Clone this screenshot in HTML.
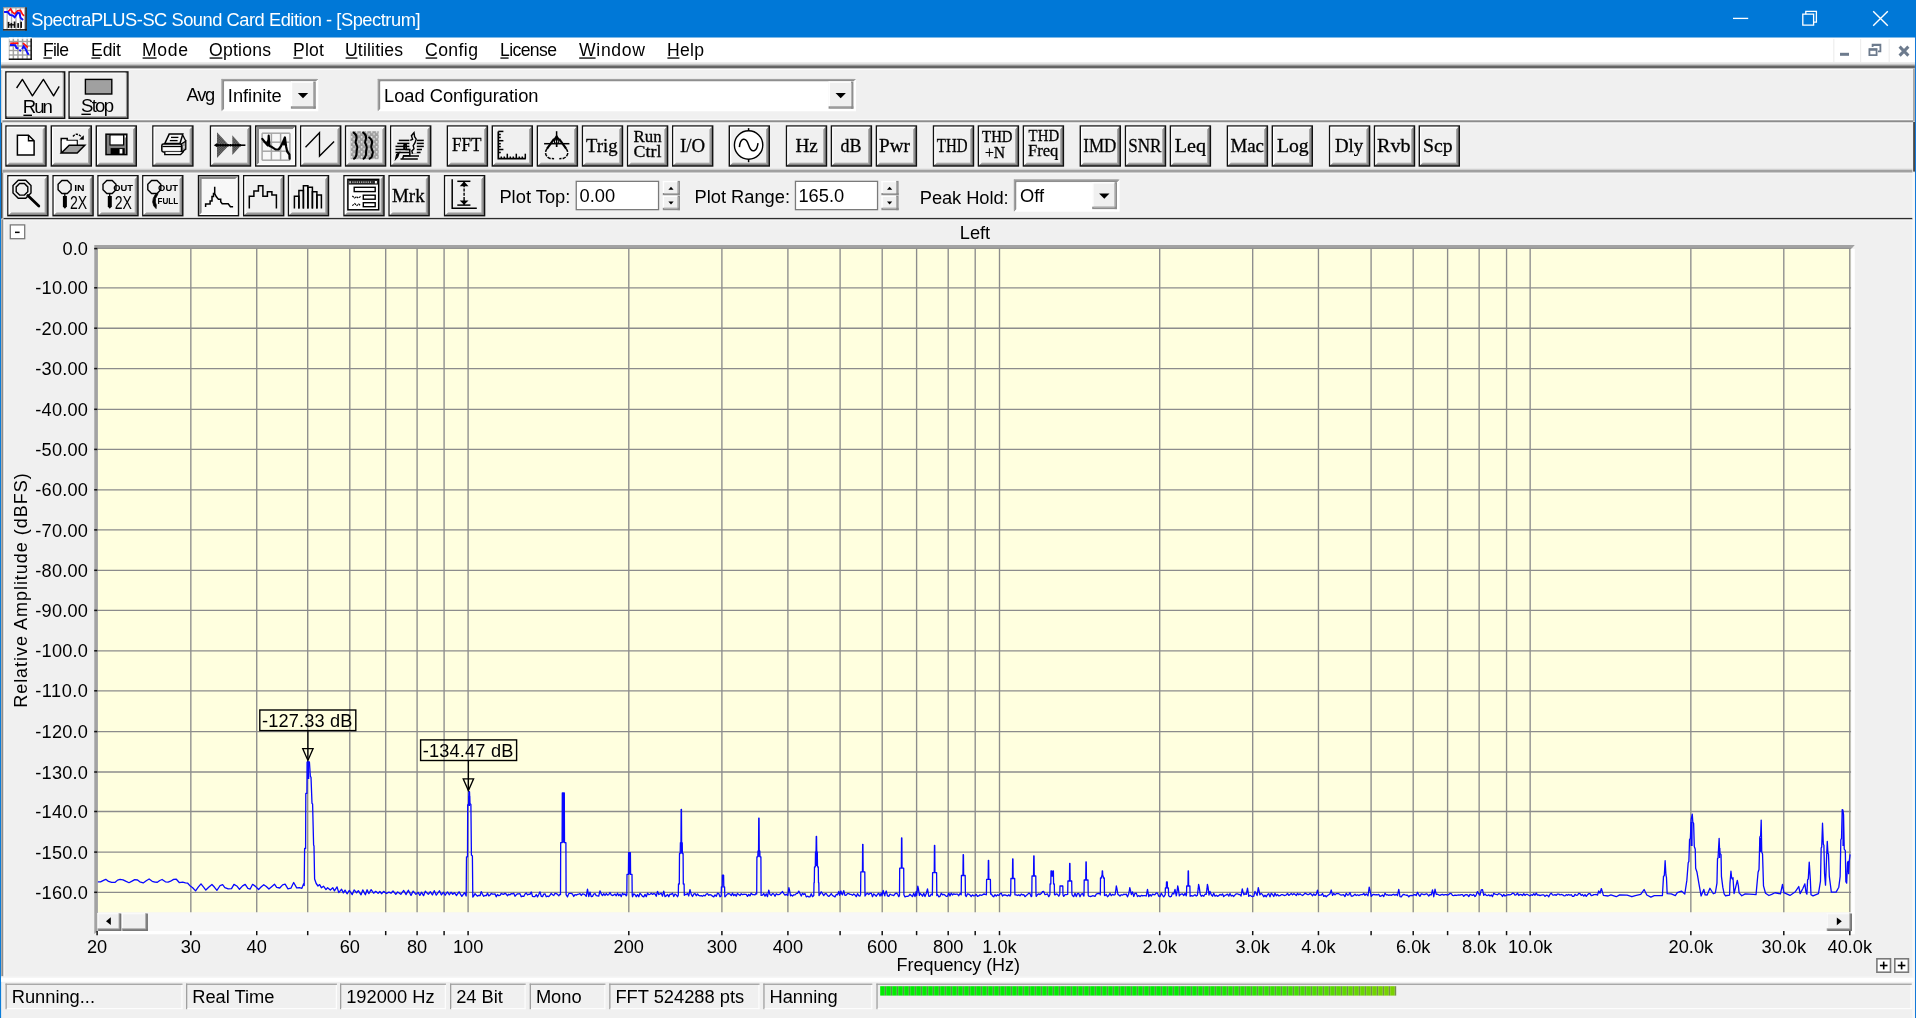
<!DOCTYPE html>
<html><head><meta charset="utf-8"><title>SpectraPLUS-SC</title>
<style>
html,body{margin:0;padding:0;background:#f0f0f0;overflow:hidden}
svg{display:block}
text{font-family:"Liberation Sans",sans-serif;white-space:pre;filter:grayscale(1)}
text.s{font-family:"Liberation Serif",serif}
</style></head><body>
<svg width="1916" height="1018" viewBox="0 0 1916 1018">
<rect x="0" y="0" width="1916" height="1018" fill="#f0f0f0"/>
<rect x="0" y="0" width="1916" height="37.7" fill="#0078d7"/>
<rect x="0" y="37" width="1.1" height="981" fill="#0a7cd9"/>
<rect x="1914.9" y="37" width="1.1" height="981" fill="#1479d8"/>
<rect x="1.1" y="37.7" width="1913.8" height="24.3" fill="#fff"/>
<rect x="1.1" y="62" width="1913.8" height="1.8" fill="#ececec"/>
<rect x="1.1" y="63.8" width="1913.8" height="1.6" fill="#c4c4c4"/>
<rect x="1.1" y="65.4" width="1913.8" height="3.2" fill="#646464"/>
<rect x="1.1" y="68.6" width="1913.8" height="1.4" fill="#fbfbfb"/>
<text x="31.2" y="25.6" font-size="18.3" textLength="389.3" lengthAdjust="spacing" fill="#fff">SpectraPLUS-SC Sound Card Edition - [Spectrum]</text>
<line x1="1733" y1="18.4" x2="1748.2" y2="18.4" stroke="#fff" stroke-width="1.3"/>
<path d="M1802.8 14.2 H1813.6 V25.2 H1802.8 Z" stroke="#fff" stroke-width="1.3" fill="none"/>
<path d="M1805.8 14.2 V11.4 H1816.4 V22.2 H1813.6" stroke="#fff" stroke-width="1.3" fill="none"/>
<path d="M1873.2 11.2 L1887.8 25.8 M1887.8 11.2 L1873.2 25.8" stroke="#fff" stroke-width="1.4" fill="none"/>
<text x="43" y="55.6" font-size="17.6" textLength="26" lengthAdjust="spacing">File</text>
<text x="91" y="55.6" font-size="17.6" textLength="30" lengthAdjust="spacing">Edit</text>
<text x="142" y="55.6" font-size="17.6" textLength="46" lengthAdjust="spacing">Mode</text>
<text x="209" y="55.6" font-size="17.6" textLength="62" lengthAdjust="spacing">Options</text>
<text x="293" y="55.6" font-size="17.6" textLength="31" lengthAdjust="spacing">Plot</text>
<text x="345" y="55.6" font-size="17.6" textLength="58" lengthAdjust="spacing">Utilities</text>
<text x="425" y="55.6" font-size="17.6" textLength="53" lengthAdjust="spacing">Config</text>
<text x="500" y="55.6" font-size="17.6" textLength="57" lengthAdjust="spacing">License</text>
<text x="579" y="55.6" font-size="17.6" textLength="66" lengthAdjust="spacing">Window</text>
<text x="667" y="55.6" font-size="17.6" textLength="37" lengthAdjust="spacing">Help</text>
<rect x="1833.2" y="39" width="1.2" height="23" fill="#eeeeee"/>
<rect x="1860" y="39" width="1.2" height="23" fill="#eeeeee"/>
<rect x="1888.6" y="39" width="1.2" height="23" fill="#eeeeee"/>
<rect x="1840" y="52.8" width="9" height="3" fill="#6d7b8d"/>
<path d="M1872.6 47 V44.6 H1880.4 V51.4 H1878" stroke="#6d7b8d" stroke-width="1.8" fill="none"/>
<rect x="1872.6" y="45" width="7.8" height="1" fill="#6d7b8d"/>
<path d="M1869.4 49.2 H1876.6 V55.2 H1869.4 Z" stroke="#6d7b8d" stroke-width="1.8" fill="none"/>
<rect x="1869" y="48.6" width="8" height="2.2" fill="#6d7b8d"/>
<path d="M1899.6 46.6 L1908.4 55.6 M1908.4 46.6 L1899.6 55.6" stroke="#6d7b8d" stroke-width="3" fill="none"/>
<rect x="97.8" y="248.6" width="1752.8" height="663.9" fill="#ffffdf"/>
<line x1="190.84" y1="248.6" x2="190.84" y2="912.5" stroke="#8c8c8c" stroke-width="1.35"/>
<line x1="256.73" y1="248.6" x2="256.73" y2="912.5" stroke="#8c8c8c" stroke-width="1.35"/>
<line x1="307.71" y1="248.6" x2="307.71" y2="912.5" stroke="#8c8c8c" stroke-width="1.35"/>
<line x1="349.8" y1="248.6" x2="349.8" y2="912.5" stroke="#8c8c8c" stroke-width="1.35"/>
<line x1="385.7" y1="248.6" x2="385.7" y2="912.5" stroke="#8c8c8c" stroke-width="1.35"/>
<line x1="417.1" y1="248.6" x2="417.1" y2="912.5" stroke="#8c8c8c" stroke-width="1.35"/>
<line x1="444.1" y1="248.6" x2="444.1" y2="912.5" stroke="#8c8c8c" stroke-width="1.35"/>
<line x1="468.1" y1="248.6" x2="468.1" y2="912.5" stroke="#8c8c8c" stroke-width="1.35"/>
<line x1="628.8" y1="248.6" x2="628.8" y2="912.5" stroke="#8c8c8c" stroke-width="1.35"/>
<line x1="721.9" y1="248.6" x2="721.9" y2="912.5" stroke="#8c8c8c" stroke-width="1.35"/>
<line x1="787.9" y1="248.6" x2="787.9" y2="912.5" stroke="#8c8c8c" stroke-width="1.35"/>
<line x1="840.1" y1="248.6" x2="840.1" y2="912.5" stroke="#8c8c8c" stroke-width="1.35"/>
<line x1="882.2" y1="248.6" x2="882.2" y2="912.5" stroke="#8c8c8c" stroke-width="1.35"/>
<line x1="916.6" y1="248.6" x2="916.6" y2="912.5" stroke="#8c8c8c" stroke-width="1.35"/>
<line x1="948.2" y1="248.6" x2="948.2" y2="912.5" stroke="#8c8c8c" stroke-width="1.35"/>
<line x1="975.2" y1="248.6" x2="975.2" y2="912.5" stroke="#8c8c8c" stroke-width="1.35"/>
<line x1="999.5" y1="248.6" x2="999.5" y2="912.5" stroke="#8c8c8c" stroke-width="1.35"/>
<line x1="1159.7" y1="248.6" x2="1159.7" y2="912.5" stroke="#8c8c8c" stroke-width="1.35"/>
<line x1="1252.7" y1="248.6" x2="1252.7" y2="912.5" stroke="#8c8c8c" stroke-width="1.35"/>
<line x1="1318.45" y1="248.6" x2="1318.45" y2="912.5" stroke="#8c8c8c" stroke-width="1.35"/>
<line x1="1371.1" y1="248.6" x2="1371.1" y2="912.5" stroke="#8c8c8c" stroke-width="1.35"/>
<line x1="1413.2" y1="248.6" x2="1413.2" y2="912.5" stroke="#8c8c8c" stroke-width="1.35"/>
<line x1="1447.6" y1="248.6" x2="1447.6" y2="912.5" stroke="#8c8c8c" stroke-width="1.35"/>
<line x1="1479.15" y1="248.6" x2="1479.15" y2="912.5" stroke="#8c8c8c" stroke-width="1.35"/>
<line x1="1506.55" y1="248.6" x2="1506.55" y2="912.5" stroke="#8c8c8c" stroke-width="1.35"/>
<line x1="1530.15" y1="248.6" x2="1530.15" y2="912.5" stroke="#8c8c8c" stroke-width="1.35"/>
<line x1="1690.85" y1="248.6" x2="1690.85" y2="912.5" stroke="#8c8c8c" stroke-width="1.35"/>
<line x1="1783.8" y1="248.6" x2="1783.8" y2="912.5" stroke="#8c8c8c" stroke-width="1.35"/>
<line x1="1849.8" y1="248.6" x2="1849.8" y2="912.5" stroke="#8c8c8c" stroke-width="1.35"/>
<line x1="97.8" y1="287.8" x2="1851.2" y2="287.8" stroke="#8c8c8c" stroke-width="1.35"/>
<line x1="97.8" y1="328.2" x2="1851.2" y2="328.2" stroke="#8c8c8c" stroke-width="1.35"/>
<line x1="97.8" y1="368.6" x2="1851.2" y2="368.6" stroke="#8c8c8c" stroke-width="1.35"/>
<line x1="97.8" y1="409.3" x2="1851.2" y2="409.3" stroke="#8c8c8c" stroke-width="1.35"/>
<line x1="97.8" y1="449.4" x2="1851.2" y2="449.4" stroke="#8c8c8c" stroke-width="1.35"/>
<line x1="97.8" y1="489.8" x2="1851.2" y2="489.8" stroke="#8c8c8c" stroke-width="1.35"/>
<line x1="97.8" y1="529.9" x2="1851.2" y2="529.9" stroke="#8c8c8c" stroke-width="1.35"/>
<line x1="97.8" y1="570.3" x2="1851.2" y2="570.3" stroke="#8c8c8c" stroke-width="1.35"/>
<line x1="97.8" y1="610.4" x2="1851.2" y2="610.4" stroke="#8c8c8c" stroke-width="1.35"/>
<line x1="97.8" y1="650.8" x2="1851.2" y2="650.8" stroke="#8c8c8c" stroke-width="1.35"/>
<line x1="97.8" y1="690.8" x2="1851.2" y2="690.8" stroke="#8c8c8c" stroke-width="1.35"/>
<line x1="97.8" y1="731.6" x2="1851.2" y2="731.6" stroke="#8c8c8c" stroke-width="1.35"/>
<line x1="97.8" y1="772" x2="1851.2" y2="772" stroke="#8c8c8c" stroke-width="1.35"/>
<line x1="97.8" y1="811.5" x2="1851.2" y2="811.5" stroke="#8c8c8c" stroke-width="1.35"/>
<line x1="97.8" y1="852.1" x2="1851.2" y2="852.1" stroke="#8c8c8c" stroke-width="1.35"/>
<line x1="97.8" y1="892.3" x2="1851.2" y2="892.3" stroke="#8c8c8c" stroke-width="1.35"/>
<path d="M94.3 244.9 H1854.8 L1851.4 248.8 H97.9 V931 L94.3 934 Z" stroke="none" stroke-width="0" fill="#a2a2a2"/>
<rect x="97.9" y="247.9" width="1753" height="0.9" fill="#8a8a8a"/>
<rect x="1851.3" y="248.8" width="3.5" height="682.2" fill="#fff"/>
<rect x="97.9" y="931" width="1756.9" height="3.3" fill="#fff"/>
<rect x="97.9" y="912.5" width="1753.4" height="18.5" fill="#f7f7f7"/>
<rect x="97.5" y="913.2" width="23.7" height="17.7" fill="#f0f0f0"/>
<rect x="97.5" y="913.2" width="23.7" height="1" fill="#fcfcfc"/>
<rect x="97.5" y="913.2" width="1" height="17.7" fill="#fcfcfc"/>
<rect x="97.5" y="928.3" width="23.7" height="2.6" fill="#a2a2a2"/>
<rect x="118.6" y="913.2" width="2.6" height="17.7" fill="#a2a2a2"/>
<rect x="98.3" y="929.4" width="22.9" height="1.5" fill="#727272"/>
<rect x="119.7" y="914" width="1.5" height="16.9" fill="#727272"/>
<rect x="122" y="913.2" width="25.8" height="17.7" fill="#f0f0f0"/>
<rect x="122" y="913.2" width="25.8" height="1" fill="#fcfcfc"/>
<rect x="122" y="913.2" width="1" height="17.7" fill="#fcfcfc"/>
<rect x="122" y="928.3" width="25.8" height="2.6" fill="#a2a2a2"/>
<rect x="145.2" y="913.2" width="2.6" height="17.7" fill="#a2a2a2"/>
<rect x="122.8" y="929.4" width="25" height="1.5" fill="#727272"/>
<rect x="146.3" y="914" width="1.5" height="16.9" fill="#727272"/>
<rect x="1826.7" y="913.2" width="25.2" height="17.7" fill="#f0f0f0"/>
<rect x="1826.7" y="913.2" width="25.2" height="1" fill="#fcfcfc"/>
<rect x="1826.7" y="913.2" width="1" height="17.7" fill="#fcfcfc"/>
<rect x="1826.7" y="928.3" width="25.2" height="2.6" fill="#a2a2a2"/>
<rect x="1849.3" y="913.2" width="2.6" height="17.7" fill="#a2a2a2"/>
<rect x="1827.5" y="929.4" width="24.4" height="1.5" fill="#727272"/>
<rect x="1850.4" y="914" width="1.5" height="16.9" fill="#727272"/>
<path d="M110.8 917.3 V925.1 L106 921.2 Z" stroke="none" stroke-width="0" fill="#000"/>
<path d="M1836.8 917.4 V925.2 L1841.8 921.3 Z" stroke="none" stroke-width="0" fill="#000"/>
<line x1="94.2" y1="248.6" x2="97.4" y2="248.6" stroke="#111" stroke-width="1.5"/>
<text x="87.9" y="255.2" font-size="18.2" text-anchor="end">0.0</text>
<line x1="94.2" y1="287.8" x2="97.4" y2="287.8" stroke="#111" stroke-width="1.5"/>
<text x="87.9" y="294.4" font-size="18.2" text-anchor="end" textLength="52.6" lengthAdjust="spacing">-10.00</text>
<line x1="94.2" y1="328.2" x2="97.4" y2="328.2" stroke="#111" stroke-width="1.5"/>
<text x="87.9" y="334.8" font-size="18.2" text-anchor="end" textLength="52.6" lengthAdjust="spacing">-20.00</text>
<line x1="94.2" y1="368.6" x2="97.4" y2="368.6" stroke="#111" stroke-width="1.5"/>
<text x="87.9" y="375.2" font-size="18.2" text-anchor="end" textLength="52.6" lengthAdjust="spacing">-30.00</text>
<line x1="94.2" y1="409.3" x2="97.4" y2="409.3" stroke="#111" stroke-width="1.5"/>
<text x="87.9" y="415.9" font-size="18.2" text-anchor="end" textLength="52.6" lengthAdjust="spacing">-40.00</text>
<line x1="94.2" y1="449.4" x2="97.4" y2="449.4" stroke="#111" stroke-width="1.5"/>
<text x="87.9" y="456" font-size="18.2" text-anchor="end" textLength="52.6" lengthAdjust="spacing">-50.00</text>
<line x1="94.2" y1="489.8" x2="97.4" y2="489.8" stroke="#111" stroke-width="1.5"/>
<text x="87.9" y="496.4" font-size="18.2" text-anchor="end" textLength="52.6" lengthAdjust="spacing">-60.00</text>
<line x1="94.2" y1="529.9" x2="97.4" y2="529.9" stroke="#111" stroke-width="1.5"/>
<text x="87.9" y="536.5" font-size="18.2" text-anchor="end" textLength="52.6" lengthAdjust="spacing">-70.00</text>
<line x1="94.2" y1="570.3" x2="97.4" y2="570.3" stroke="#111" stroke-width="1.5"/>
<text x="87.9" y="576.9" font-size="18.2" text-anchor="end" textLength="52.6" lengthAdjust="spacing">-80.00</text>
<line x1="94.2" y1="610.4" x2="97.4" y2="610.4" stroke="#111" stroke-width="1.5"/>
<text x="87.9" y="617" font-size="18.2" text-anchor="end" textLength="52.6" lengthAdjust="spacing">-90.00</text>
<line x1="94.2" y1="650.8" x2="97.4" y2="650.8" stroke="#111" stroke-width="1.5"/>
<text x="87.9" y="657.4" font-size="18.2" text-anchor="end" textLength="52.6" lengthAdjust="spacing">-100.0</text>
<line x1="94.2" y1="690.8" x2="97.4" y2="690.8" stroke="#111" stroke-width="1.5"/>
<text x="87.9" y="697.4" font-size="18.2" text-anchor="end" textLength="52.6" lengthAdjust="spacing">-110.0</text>
<line x1="94.2" y1="731.6" x2="97.4" y2="731.6" stroke="#111" stroke-width="1.5"/>
<text x="87.9" y="738.2" font-size="18.2" text-anchor="end" textLength="52.6" lengthAdjust="spacing">-120.0</text>
<line x1="94.2" y1="772" x2="97.4" y2="772" stroke="#111" stroke-width="1.5"/>
<text x="87.9" y="778.6" font-size="18.2" text-anchor="end" textLength="52.6" lengthAdjust="spacing">-130.0</text>
<line x1="94.2" y1="811.5" x2="97.4" y2="811.5" stroke="#111" stroke-width="1.5"/>
<text x="87.9" y="818.1" font-size="18.2" text-anchor="end" textLength="52.6" lengthAdjust="spacing">-140.0</text>
<line x1="94.2" y1="852.1" x2="97.4" y2="852.1" stroke="#111" stroke-width="1.5"/>
<text x="87.9" y="858.7" font-size="18.2" text-anchor="end" textLength="52.6" lengthAdjust="spacing">-150.0</text>
<line x1="94.2" y1="892.3" x2="97.4" y2="892.3" stroke="#111" stroke-width="1.5"/>
<text x="87.9" y="898.9" font-size="18.2" text-anchor="end" textLength="52.6" lengthAdjust="spacing">-160.0</text>
<line x1="97.1" y1="931" x2="97.1" y2="935.2" stroke="#111" stroke-width="1.5"/>
<text x="97.1" y="953.4" font-size="18.2" text-anchor="middle">20</text>
<line x1="190.84" y1="931" x2="190.84" y2="935.2" stroke="#111" stroke-width="1.5"/>
<text x="190.84" y="953.4" font-size="18.2" text-anchor="middle">30</text>
<line x1="256.73" y1="931" x2="256.73" y2="935.2" stroke="#111" stroke-width="1.5"/>
<text x="256.73" y="953.4" font-size="18.2" text-anchor="middle">40</text>
<line x1="307.71" y1="931" x2="307.71" y2="935.2" stroke="#111" stroke-width="1.5"/>
<line x1="349.8" y1="931" x2="349.8" y2="935.2" stroke="#111" stroke-width="1.5"/>
<text x="349.8" y="953.4" font-size="18.2" text-anchor="middle">60</text>
<line x1="385.7" y1="931" x2="385.7" y2="935.2" stroke="#111" stroke-width="1.5"/>
<line x1="417.1" y1="931" x2="417.1" y2="935.2" stroke="#111" stroke-width="1.5"/>
<text x="417.1" y="953.4" font-size="18.2" text-anchor="middle">80</text>
<line x1="444.1" y1="931" x2="444.1" y2="935.2" stroke="#111" stroke-width="1.5"/>
<line x1="468.1" y1="931" x2="468.1" y2="935.2" stroke="#111" stroke-width="1.5"/>
<text x="468.1" y="953.4" font-size="18.2" text-anchor="middle">100</text>
<line x1="628.8" y1="931" x2="628.8" y2="935.2" stroke="#111" stroke-width="1.5"/>
<text x="628.8" y="953.4" font-size="18.2" text-anchor="middle">200</text>
<line x1="721.9" y1="931" x2="721.9" y2="935.2" stroke="#111" stroke-width="1.5"/>
<text x="721.9" y="953.4" font-size="18.2" text-anchor="middle">300</text>
<line x1="787.9" y1="931" x2="787.9" y2="935.2" stroke="#111" stroke-width="1.5"/>
<text x="787.9" y="953.4" font-size="18.2" text-anchor="middle">400</text>
<line x1="840.1" y1="931" x2="840.1" y2="935.2" stroke="#111" stroke-width="1.5"/>
<line x1="882.2" y1="931" x2="882.2" y2="935.2" stroke="#111" stroke-width="1.5"/>
<text x="882.2" y="953.4" font-size="18.2" text-anchor="middle">600</text>
<line x1="916.6" y1="931" x2="916.6" y2="935.2" stroke="#111" stroke-width="1.5"/>
<line x1="948.2" y1="931" x2="948.2" y2="935.2" stroke="#111" stroke-width="1.5"/>
<text x="948.2" y="953.4" font-size="18.2" text-anchor="middle">800</text>
<line x1="975.2" y1="931" x2="975.2" y2="935.2" stroke="#111" stroke-width="1.5"/>
<line x1="999.5" y1="931" x2="999.5" y2="935.2" stroke="#111" stroke-width="1.5"/>
<text x="999.5" y="953.4" font-size="18.2" text-anchor="middle">1.0k</text>
<line x1="1159.7" y1="931" x2="1159.7" y2="935.2" stroke="#111" stroke-width="1.5"/>
<text x="1159.7" y="953.4" font-size="18.2" text-anchor="middle">2.0k</text>
<line x1="1252.7" y1="931" x2="1252.7" y2="935.2" stroke="#111" stroke-width="1.5"/>
<text x="1252.7" y="953.4" font-size="18.2" text-anchor="middle">3.0k</text>
<line x1="1318.45" y1="931" x2="1318.45" y2="935.2" stroke="#111" stroke-width="1.5"/>
<text x="1318.45" y="953.4" font-size="18.2" text-anchor="middle">4.0k</text>
<line x1="1371.1" y1="931" x2="1371.1" y2="935.2" stroke="#111" stroke-width="1.5"/>
<line x1="1413.2" y1="931" x2="1413.2" y2="935.2" stroke="#111" stroke-width="1.5"/>
<text x="1413.2" y="953.4" font-size="18.2" text-anchor="middle">6.0k</text>
<line x1="1447.6" y1="931" x2="1447.6" y2="935.2" stroke="#111" stroke-width="1.5"/>
<line x1="1479.15" y1="931" x2="1479.15" y2="935.2" stroke="#111" stroke-width="1.5"/>
<text x="1479.15" y="953.4" font-size="18.2" text-anchor="middle">8.0k</text>
<line x1="1506.55" y1="931" x2="1506.55" y2="935.2" stroke="#111" stroke-width="1.5"/>
<line x1="1530.15" y1="931" x2="1530.15" y2="935.2" stroke="#111" stroke-width="1.5"/>
<text x="1530.15" y="953.4" font-size="18.2" text-anchor="middle">10.0k</text>
<line x1="1690.85" y1="931" x2="1690.85" y2="935.2" stroke="#111" stroke-width="1.5"/>
<text x="1690.85" y="953.4" font-size="18.2" text-anchor="middle">20.0k</text>
<line x1="1783.8" y1="931" x2="1783.8" y2="935.2" stroke="#111" stroke-width="1.5"/>
<text x="1783.8" y="953.4" font-size="18.2" text-anchor="middle">30.0k</text>
<line x1="1849.8" y1="931" x2="1849.8" y2="935.2" stroke="#111" stroke-width="1.5"/>
<text x="1849.8" y="953.4" font-size="18.2" text-anchor="middle">40.0k</text>
<text x="896.6" y="970.8" font-size="18" textLength="123.4" lengthAdjust="spacing">Frequency (Hz)</text>
<text x="959.8" y="238.8" font-size="18.2">Left</text>
<g transform="translate(27.4 707.8) rotate(-90)">
<text x="0" y="0" font-size="18" textLength="234.5" lengthAdjust="spacing">Relative Amplitude (dBFS)</text>
</g>
<rect x="10.3" y="224.9" width="14.4" height="13.8" fill="#fff" stroke="#7a7a7a" stroke-width="1.3"/>
<rect x="15" y="231.6" width="4.6" height="1.5" fill="#000"/>
<rect x="1876.9" y="958.8" width="13.6" height="13.4" fill="#fff" stroke="#7a7a7a" stroke-width="1.6"/>
<rect x="1879.9" y="964.7" width="7.6" height="1.6" fill="#000"/>
<rect x="1882.9" y="961.6" width="1.6" height="7.8" fill="#000"/>
<rect x="1894.8" y="958.8" width="13.6" height="13.4" fill="#fff" stroke="#7a7a7a" stroke-width="1.6"/>
<rect x="1897.8" y="964.7" width="7.6" height="1.6" fill="#000"/>
<rect x="1900.8" y="961.6" width="1.6" height="7.8" fill="#000"/>
<path d="M97.9 881.79 L100.55 881.93 L103.5 880.35 L105.76 879.31 L108.55 881.49 L111.63 882.42 L115.2 882.31 L117.6 880.13 L120.05 879.44 L123.02 879.81 L126.17 881.41 L129 882.72 L131.55 881.38 L134.77 879.59 L137.55 880 L139.81 881.85 L143.23 882.96 L146.25 880.73 L149.11 879.01 L152.21 881.29 L154.95 882.21 L157.39 882.25 L159.77 880.51 L162.08 879.51 L165.43 881.83 L168.13 882.16 L170.58 881.22 L173.6 879.34 L176.32 879.27 L179.24 882.53 L182.7 882.03 L185.45 882.87 L187.73 883.2 L190.33 886.07 L192.66 887.69 L195.59 890.92 L198.23 887.18 L200.99 883.87 L203.6 887.15 L205.83 890.06 L208.68 887.34 L211.92 884.51 L214.32 887.04 L216.91 890.34 L220.14 885.51 L222.61 884.7 L224.84 887.58 L228.19 888.93 L231.54 888.64 L233.97 884.42 L237.18 886.27 L239.48 889.28 L242.58 885.87 L245.18 884.35 L247.86 888.38 L250.21 889.05 L252.59 884.31 L255.21 886.12 L258.58 889.56 L261.3 886.78 L263.8 884.77 L266.31 886.46 L268.93 889.06 L271.64 886.68 L274.47 884.23 L276.67 887.36 L279.74 888 L282.61 884.82 L285.11 884.16 L287.98 888.81 L290.92 888.22 L293.66 882.54 L296.7 887.92 L299.57 887.73 L301.92 888.26 L303.63 883.64 L304.2 885.5 L304.6 848.5 L305.6 848.5 L305.8 793.4 L306.9 793.4 L307.1 762 L307.9 761.6 L308.6 762 L309.4 762 L310.4 776.7 L311 777 L312 803.4 L312.6 804 L313.6 845 L314 846 L314.6 879 L316.2 883.5 L318 886 L319.6 884.6 L321.5 887.8 L323.5 886.2 L326 889.6 L327.57 887.77 L330.33 890.07 L332.81 887.69 L334.44 890.88 L337.04 886.85 L338.74 892.63 L341.6 889.24 L343.37 892.92 L345.04 890.09 L347.07 893.81 L349.34 890.48 L352.25 894.62 L354.09 889.92 L356.61 892.71 L358.35 890.63 L361.05 894.81 L362.77 889.84 L365.38 894.7 L367.12 889.77 L368.82 893.57 L371.15 889.69 L373.63 893.16 L375.66 891.35 L378.1 893.31 L379.88 891.51 L381.56 893.7 L383.66 891.37 L386.47 893.49 L388.88 892.08 L391.03 893.2 L393.03 890.93 L395.8 894.33 L397.71 892.03 L400.8 894.32 L403.71 890.46 L406.1 894.58 L408.33 890.2 L411.03 895.41 L413.18 891.07 L415.91 894.38 L418.16 892.32 L419.85 895.35 L421.56 892.3 L423.57 895.65 L425.3 891.2 L428.3 894.35 L430.35 891.77 L432.42 894.89 L434.27 890.68 L436.29 895.19 L439.45 890.76 L441.44 894.84 L443.53 892.17 L445.14 895.23 L447.49 891.96 L449.42 894.76 L451.02 892.26 L452.77 894.26 L454.43 892.7 L456.52 895.49 L459.06 891.8 L461.86 896.38 L464.6 892.66 L466.2 896 L466.5 856.8 L467.5 856.8 L467.7 805 L468.6 804 L468.9 791.7 L469.5 791.7 L469.9 803.5 L470.9 804.5 L471.4 855 L472.4 856 L472.8 897 L473.75 895.89 L475 893.63 L476.25 895.02 L477.5 896.16 L478.75 895.32 L480 895.7 L481.25 891.57 L482.5 894.47 L483.75 896.28 L485 895.49 L486.25 895.69 L487.5 893.11 L488.75 895.94 L490 895.13 L491.25 893.35 L492.5 894.06 L493.75 894.11 L495 893.88 L496.25 896.81 L497.5 894.55 L498.75 895.7 L500 895.44 L501.25 893.39 L502.5 894.06 L503.75 894.26 L505 893.15 L506.25 894.12 L507.5 895.73 L508.75 894.21 L510 894.87 L511.25 893.55 L512.5 893.86 L513.75 893.28 L515 896.22 L516.25 894.81 L517.5 893.9 L518.75 893.9 L520 893.64 L521.25 896.72 L522.5 896.22 L523.75 896.47 L525 893.98 L526.25 892.94 L527.5 894.97 L528.75 894.25 L530 894.41 L531.25 892.04 L532.5 896.29 L533.75 896.62 L535 896.53 L536.25 894.51 L537.5 896.9 L538.75 894.47 L540 891.84 L541.25 896.27 L542.5 896.66 L543.75 894.11 L545 893.82 L546.25 896.73 L547.5 896.19 L548.75 896.57 L550 895.19 L551.25 893.29 L552.5 894.81 L553.75 895.55 L555 893.29 L556.25 893.58 L557.5 894.41 L558.75 895.91 L560 894.09 L560.5 894.55 L560.7 842.7 L562.1 842.7 L562.3 793 L562.7 793 L562.9 793.4 L563.1 793.4 L563.3 793 L563.3 793 L563.5 793.4 L563.7 793.4 L563.9 793 L564.3 793 L564.5 842.7 L565.9 842.7 L566.1 894.68 L567.5 896.89 L568.75 893.63 L570 893.44 L571.25 893.45 L572.5 894.08 L573.75 896.47 L575 894.67 L576.25 895.09 L577.5 894.39 L578.75 894.15 L580 893.58 L581.25 895.49 L582.5 893.92 L583.75 894.04 L585 894.79 L586.25 896.32 L587.5 889.05 L588.75 896.5 L590 892.16 L591.25 896.62 L592.5 896.35 L593.75 894.04 L595 893.69 L596.25 895.69 L597.5 895.84 L598.75 896.01 L600 890.85 L601.25 893.98 L602.5 895.55 L603.75 893.59 L605 895.52 L606.25 893.53 L607.5 895.09 L608.75 894.57 L610 892.48 L611.25 894.85 L612.5 895.55 L613.75 894.91 L615 894.04 L616.25 895.78 L617.5 893.18 L618.75 895.66 L620 894.08 L621.25 896.62 L622.5 893.23 L623.75 894.7 L625 893.85 L626.25 895.91 L626.8 895 L627 874.4 L628.4 874.4 L628.6 852.7 L629 852.7 L629.2 853 L629.3 853 L629.5 852.7 L629.5 852.7 L629.7 853 L629.8 853 L630 852.7 L630.4 852.7 L630.6 874.4 L632 874.4 L632.2 894.66 L632.5 896.72 L633.75 893.81 L635 894.68 L636.25 896.71 L637.5 894.6 L638.75 896.8 L640 893.3 L641.25 894.59 L642.5 896.46 L643.75 896.89 L645 894.35 L646.25 896.66 L647.5 893.22 L648.75 894.54 L650 894.36 L651.25 893.11 L652.5 894.44 L653.75 893.57 L655 893.89 L656.25 896.22 L657.5 891.32 L658.75 894.52 L660 893.83 L661.25 893.28 L662.5 896.18 L663.75 891.07 L665 896.6 L666.25 895.94 L667.5 894.39 L668.75 896.74 L670 894.1 L671.25 894.3 L672.5 893.11 L673.75 896.58 L675 893.98 L676.25 894.91 L677.5 896.72 L678.3 895.14 L678.5 884 L679.3 884 L679.5 853.5 L680.2 853.5 L680.4 842.7 L680.95 842.7 L681.15 809.3 L681.45 809.3 L681.65 842.7 L682.2 842.7 L682.4 853.5 L683.1 853.5 L683.3 884 L684.1 884 L684.3 895.32 L685 894.35 L686.25 894.48 L687.5 893.4 L688.75 895.96 L690 889.69 L691.25 894.34 L692.5 896.46 L693.75 894.11 L695 893.47 L696.25 895.8 L697.5 893.99 L698.75 895.46 L700 895.94 L701.25 895.62 L702.5 896.3 L703.75 895.25 L705 895.9 L706.25 894.04 L707.5 893.68 L708.75 895.3 L710 894.61 L711.25 895.03 L712.5 896.17 L713.75 896.87 L715 894.9 L716.25 896.29 L717.5 893.25 L718.75 893.55 L720 896.8 L721.2 895.91 L721.4 887 L722.2 887 L722.4 875.2 L722.75 875.2 L722.95 875.2 L723.05 875.2 L723.25 875.2 L723.6 875.2 L723.8 887 L724.6 887 L724.8 896.48 L725 896.69 L726.25 895.37 L727.5 893.93 L728.75 893.64 L730 894.07 L731.25 895.58 L732.5 893.14 L733.75 895.68 L735 894.29 L736.25 896.12 L737.5 893.34 L738.75 894.6 L740 895.53 L741.25 893.72 L742.5 894.66 L743.75 894.27 L745 894.29 L746.25 894.46 L747.5 896.38 L748.75 894.48 L750 895.87 L751.25 893.12 L752.5 894.71 L753.75 894.64 L755 894.85 L756.25 893.16 L756.7 894.07 L756.9 856.8 L757.8 856.8 L758 851 L758.55 851 L758.75 818.1 L759.05 818.1 L759.25 851 L759.8 851 L760 856.8 L760.9 856.8 L761.1 895.4 L762.5 895.08 L763.75 893.51 L765 896.16 L766.25 893.85 L767.5 896.68 L768.75 890.16 L770 894.57 L771.25 895.46 L772.5 893.71 L773.75 893.94 L775 896.32 L776.25 893.8 L777.5 894.62 L778.75 894.56 L780 894.04 L781.25 892.82 L782.5 891.46 L783.75 893.55 L785 895.19 L786.25 894.26 L787.7 895.54 L788.5 890.35 L788.9 887.7 L789.5 890.2 L790.5 895.74 L791.25 894.96 L792.5 896 L793.75 894.84 L795 894.9 L796.25 893.59 L797.5 893.45 L798.75 891.13 L800 893.41 L801.25 896.06 L802.5 893.31 L803.75 894.54 L805 893.62 L806.25 896.89 L807.5 896.2 L808.75 896.83 L810 896.74 L811.25 893.73 L812.5 896.64 L813.8 895.55 L814 882.7 L814.3 882.7 L814.5 866.9 L815.3 866.9 L815.5 852 L816.05 852 L816.25 836.5 L816.55 836.5 L816.75 852 L817.3 852 L817.5 866.9 L818.3 866.9 L818.5 882.7 L818.8 882.7 L819 895.58 L820 894.1 L821.25 891.77 L822.5 893.71 L823.75 895.68 L825 893.74 L826.25 893.54 L827.5 895.52 L828.75 896.42 L830 895.3 L831.25 893.5 L832.5 895.49 L833.75 896.13 L835 896.86 L836.25 894.47 L837.5 894.78 L838.75 891.47 L839.7 895.27 L840.5 892 L840.9 891 L841.5 893.5 L842.5 894.73 L843.75 890.66 L845 895.44 L846.25 895.05 L847.5 893.6 L848.75 893.57 L850 894.45 L851.25 894.46 L852.5 895.32 L853.75 893.88 L855 894.9 L856.25 896.66 L857.5 893.67 L858.75 895.53 L860 896.07 L860.6 894.56 L860.8 871.9 L862.45 871.9 L862.65 844.3 L862.95 844.3 L863.15 871.9 L864.8 871.9 L865 895.99 L866.25 894.04 L867.5 893.27 L868.75 894.64 L870 893.32 L871.25 893.15 L872.5 896.68 L873.75 893.86 L875 895.03 L876.25 896.19 L877.5 894.28 L878.75 893.28 L880 896.08 L881.25 893.12 L882 895.75 L882.8 891.75 L883.2 890.5 L883.8 893 L884.8 895.88 L885 893.96 L886.25 890.98 L887.5 895.95 L888.75 896.31 L890 894.11 L891.25 894.76 L892.5 895.09 L893.75 895.54 L895 893.92 L896.25 893.16 L897.5 894 L898.75 896.69 L899.5 895.36 L899.7 868.2 L901.35 868.2 L901.55 838 L901.85 838 L902.05 868.2 L903.7 868.2 L903.9 894.76 L905 896.82 L906.25 896.29 L907.5 896.36 L908.75 895.85 L910 894.27 L911.25 895.47 L912.5 896.56 L913.75 893.2 L915 896.63 L916.25 891.51 L916.6 895.53 L917.4 889.6 L917.8 886.2 L918.4 888.7 L919.4 895.48 L920 893.35 L921.25 894.48 L922.5 896.21 L923.75 893.35 L925 896.57 L926.25 893.51 L927.5 888.98 L928.75 896.19 L930 896.24 L931.25 894.19 L932.4 895.02 L932.6 872.7 L934.25 872.7 L934.45 845.5 L934.75 845.5 L934.95 872.7 L936.6 872.7 L936.8 895.59 L937.5 894.5 L938.75 896.76 L940 896.34 L941.25 893.22 L942.5 894.76 L943.75 894.42 L945 895.14 L946.25 896.38 L947.5 896.22 L948.75 893.1 L950 896 L951.25 893.12 L952.5 894.97 L953.75 893.8 L955 894.42 L956.25 894.09 L957.5 894.18 L958.75 895.76 L960 893.52 L961.2 894.7 L961.4 875.5 L962.95 875.5 L963.15 854.7 L963.45 854.7 L963.65 875.5 L965.2 875.5 L965.4 895.38 L966.25 896.48 L967.5 893.86 L968.75 894.1 L970 895 L971.25 896.46 L972.5 894.85 L973.75 895.97 L975 895.56 L976.25 894.34 L977.5 896.3 L978.75 895.92 L980 894.77 L981.25 895.3 L982.5 894.86 L983.75 894 L985 894.25 L986.4 894.81 L986.6 879.4 L988.15 879.4 L988.35 860.5 L988.65 860.5 L988.85 879.4 L990.4 879.4 L990.6 894.15 L991.25 893.82 L992.5 895.87 L993.75 896.76 L995 894.56 L996.25 896.12 L997.5 894.75 L998.75 895.52 L1000 893.88 L1001.25 893.23 L1002.5 896.11 L1003.75 895 L1005 894.86 L1006.25 895.39 L1007.5 895.92 L1008.75 894.73 L1010 895.95 L1010.7 894.67 L1010.9 878.5 L1012.45 878.5 L1012.65 859 L1012.95 859 L1013.15 878.5 L1014.7 878.5 L1014.9 894.81 L1016.25 894.82 L1017.5 895.49 L1018.75 894.69 L1020 895.81 L1021.25 894.05 L1022.5 894.83 L1023.75 894.66 L1025 896.63 L1026.25 895.59 L1027.5 894.58 L1028.75 893.17 L1030 893.71 L1031.25 896.67 L1031.8 895.98 L1032 876 L1033.55 876 L1033.75 856 L1034.05 856 L1034.25 876 L1035.8 876 L1036 895.2 L1036.25 896.25 L1037.5 894.66 L1038.75 893.9 L1040 894.59 L1041.25 893.57 L1042.5 891.63 L1043.75 891.36 L1045 894.7 L1046.25 894.44 L1047.5 893.95 L1048.75 896.67 L1049.9 894.73 L1050.1 884 L1050.8 884 L1051 871 L1051.5 871 L1051.7 876 L1051.9 876 L1052.1 872 L1052.3 872 L1052.5 876 L1052.7 876 L1052.9 871 L1053.4 871 L1053.6 884 L1054.3 884 L1054.5 894.61 L1055 894.88 L1056.25 893.96 L1057.5 894.44 L1058.75 896.21 L1059.8 894.47 L1060 886 L1060.8 886 L1061 886 L1061.8 886 L1062 886 L1062.8 886 L1063 894.87 L1063.75 896.33 L1065 894.53 L1066.25 894.72 L1067.7 894.27 L1067.9 881 L1069.45 881 L1069.65 863.5 L1069.95 863.5 L1070.15 881 L1071.7 881 L1071.9 894.02 L1072.5 895.61 L1073.75 896.63 L1075 893.32 L1076.25 896.54 L1077.5 893.63 L1078.75 893.47 L1080 896.72 L1081.25 894.05 L1082.5 893.64 L1083.75 896.05 L1084 895.74 L1084.2 880 L1085.75 880 L1085.95 861.9 L1086.25 861.9 L1086.45 880 L1088 880 L1088.2 895.13 L1088.75 896.07 L1090 896.5 L1091.25 896.29 L1092.5 895.73 L1093.75 895.92 L1095 896.45 L1096.25 894.11 L1097.5 893.63 L1098.75 893.32 L1100 893.65 L1100.3 894.89 L1100.5 878 L1101.4 878 L1101.6 876 L1102.05 876 L1102.25 871 L1102.55 871 L1102.75 876 L1103.2 876 L1103.4 878 L1104.3 878 L1104.5 895.42 L1105 895.63 L1106.25 894.52 L1107.5 896.75 L1108.75 895.52 L1110 893.21 L1111.25 895.69 L1112.5 894.36 L1113.75 895.04 L1115.1 894.6 L1115.9 889.5 L1116.3 886 L1116.9 888.5 L1117.9 894.34 L1118.75 894.9 L1120 896.03 L1121.25 894.75 L1122.5 895.21 L1123.75 894.21 L1125 894.63 L1126.25 894.13 L1127.5 896.8 L1128.6 894.13 L1129.4 890.35 L1129.8 887.7 L1130.4 890.2 L1131.4 894.6 L1132.5 891.91 L1133.75 896.47 L1135 893.29 L1136.25 893.12 L1137.5 896.6 L1138.75 895.6 L1140 896.56 L1141.25 895.44 L1142.5 895.75 L1143.75 895.69 L1145 895.63 L1146.25 896 L1147.5 889.47 L1148.75 896.57 L1150 894.5 L1151.25 896.09 L1152.5 894.08 L1153.75 894.7 L1155 894.74 L1156.25 892.95 L1157.5 893.25 L1158.75 896.18 L1160 896.59 L1161.25 893.15 L1162.5 895.35 L1163.75 896.83 L1165.2 894.62 L1165.4 888 L1166.3 888 L1166.5 881.9 L1167.3 881.9 L1167.5 888 L1168.4 888 L1168.6 895.82 L1170 896.77 L1171.25 896.4 L1172.5 893.17 L1173.75 894.02 L1175 889.49 L1176.25 895.81 L1176.5 895.1 L1177.3 889.5 L1177.7 886 L1178.3 888.5 L1179.3 895.87 L1180 894.85 L1181.25 894.07 L1182.5 893.78 L1183.75 895.57 L1185 893.4 L1186.25 895.87 L1186.5 894.68 L1186.7 886 L1187.95 886 L1188.15 871 L1188.45 871 L1188.65 886 L1189.9 886 L1190.1 896.3 L1191.25 895.67 L1192.5 896.13 L1193.75 895.55 L1195 894.69 L1196.25 896.09 L1197.4 895.17 L1198.2 888.7 L1198.6 884.4 L1199.2 886.9 L1200.2 894.16 L1201.25 896.24 L1202.5 895.4 L1203.75 896.26 L1205 894.27 L1206.2 894.36 L1207 888.7 L1207.4 884.4 L1208 886.9 L1209 895.16 L1210 891.39 L1211.25 894.71 L1212.5 896.2 L1213.75 893.26 L1215 896.18 L1216.25 895.27 L1217.5 896.33 L1218.75 895.7 L1220 894.42 L1221.25 895.2 L1222.5 893.86 L1223.75 896.64 L1225 895.41 L1226.25 894.87 L1227.5 894.07 L1228.75 896.11 L1230 893.43 L1231.25 896.03 L1232.5 895.3 L1233.75 896.46 L1235 894.91 L1236.25 893.82 L1237.5 893.79 L1238.75 894.48 L1240 894.63 L1241.1 895.97 L1241.9 891 L1242.3 889 L1242.9 891.5 L1243.9 894.71 L1245 893.69 L1246.25 894.41 L1247.5 888.21 L1248.75 896.39 L1250 895.26 L1251.25 896.06 L1252.5 896.7 L1253.75 896.21 L1255 891.46 L1256.25 893.79 L1257.1 895.55 L1257.9 890.35 L1258.3 887.7 L1258.9 890.2 L1259.9 894.86 L1261.25 893.34 L1262.5 894.61 L1263.75 896.75 L1265 895.25 L1266.25 896.73 L1267.5 894.59 L1268.75 893.71 L1270 896.87 L1271.25 893.25 L1272.5 894.44 L1273.75 896.54 L1275 893.28 L1276.25 895.8 L1277.5 894.41 L1278.75 895.97 L1280 895.67 L1281.25 894.71 L1282.5 894.69 L1283.75 895.26 L1285 895.52 L1286.25 894.94 L1287.5 893.47 L1288.75 895.39 L1290 894.67 L1291.25 893.32 L1292.5 894.89 L1293.75 893.69 L1295 894.37 L1296.25 895.57 L1297.5 893.32 L1298.75 894.71 L1300 893.87 L1301.25 894.75 L1302.5 895.57 L1303.75 894.57 L1305 893.11 L1306.25 893.81 L1307.5 894.62 L1308.75 894.5 L1310 893.43 L1311.25 894.14 L1312.5 895.79 L1313.75 893.87 L1315 895.37 L1316.25 894.37 L1317.5 890.24 L1318.75 895.4 L1320 895.11 L1321.25 895.02 L1322.5 893.56 L1323.75 896.39 L1325 895.45 L1326.25 896.73 L1327.5 895.56 L1328.75 894.7 L1330 893.92 L1331.25 890.04 L1332.5 895.44 L1333.75 893.46 L1335 894.89 L1336.25 893.62 L1337.5 893.66 L1338.75 893.72 L1340 894.58 L1341.25 895.1 L1342.5 894.8 L1343.75 894.76 L1345 896.57 L1346.25 893.3 L1347.5 895.16 L1348.75 894.92 L1350 892.6 L1351.25 896.05 L1352.5 896.18 L1353.75 895.21 L1355 894.14 L1356.25 895.46 L1357.5 894.77 L1358.75 895.56 L1360 894.96 L1361.25 894.56 L1362.5 894.69 L1363.75 893.43 L1365 895.42 L1366.25 893.86 L1367.5 895.18 L1368 895.74 L1368.8 890.1 L1369.2 887.2 L1369.8 889.7 L1370.8 894.14 L1371.25 896.38 L1372.5 894.97 L1373.75 894.48 L1375 894.87 L1376.25 894.67 L1377.5 894.8 L1378.75 894.44 L1380 896.33 L1381.25 895.91 L1382.5 894.91 L1383.75 896.58 L1385 893.12 L1386.25 894.99 L1387.5 894.69 L1388.75 895.41 L1390 894.87 L1391.25 895.34 L1392.5 894.62 L1393.75 894.26 L1395 895.31 L1396.25 894.33 L1397.5 895.49 L1398.75 889.45 L1400 896.6 L1401.25 896.89 L1402.5 895.11 L1403.75 894.43 L1405 894.88 L1406.25 895.23 L1407.5 895.15 L1408.75 896.89 L1410 895.57 L1411.25 895.47 L1412.5 895.72 L1413.75 894.75 L1415 894.62 L1416.25 895.59 L1417.5 892.28 L1418.75 894.77 L1420 896.3 L1421.25 893.85 L1422.5 894.11 L1423.75 894.55 L1425 894.52 L1426.25 893.75 L1427.5 894.41 L1428.75 896.03 L1430 894.52 L1431.25 894.94 L1432.5 889.89 L1433.75 896.75 L1435 889.25 L1436.25 894.3 L1437.5 894.25 L1438.75 894.87 L1440 895.45 L1441.25 894.61 L1442.5 894.46 L1443.75 895.04 L1445 894.55 L1446.25 894.63 L1447.5 895.2 L1448.75 894.4 L1450 893.45 L1451.25 893.59 L1452.5 895.27 L1453.75 895.54 L1455 895.02 L1456.25 895.48 L1457.5 895.13 L1458.75 895.02 L1460 895.16 L1461.25 894.56 L1462.5 894.61 L1463.75 896.33 L1465 895 L1466.25 894.67 L1467.5 894.88 L1468.75 896.55 L1470 894.44 L1471.25 894.9 L1472.5 895.42 L1473.75 894.54 L1475 896.57 L1476.25 894.76 L1477.5 891.61 L1478.75 893.78 L1480 895.22 L1481.25 889.92 L1482.5 889.63 L1483.75 895.35 L1485 893.9 L1486.25 895.3 L1487.5 895.54 L1488.75 894.71 L1490 895.91 L1491.25 895.01 L1492.5 896.63 L1493.75 893.27 L1495 894.09 L1496.25 894.47 L1497.5 894.77 L1498.75 893.62 L1500 894 L1501.25 894.76 L1502.5 896.46 L1503.75 894.37 L1505 895.99 L1506.25 895.37 L1507.5 894.83 L1508.75 894.64 L1510 894.79 L1511.25 894.49 L1512.5 893.14 L1513.75 893.42 L1515 895.24 L1516.25 894.75 L1517.5 893.13 L1518.75 895.49 L1520 894.43 L1521.25 894.62 L1522.5 895.52 L1523.75 893.74 L1525 895.39 L1526.25 894.32 L1527.5 894.45 L1528.75 895.25 L1530 895.78 L1531.25 894.76 L1532.5 895.31 L1533.75 893.72 L1535 895.27 L1536.25 893.11 L1537.5 895.19 L1538.75 894.93 L1540 895.63 L1541.25 895.08 L1542.5 894.79 L1543.75 894.85 L1545 896.39 L1546.25 895.21 L1547.5 895.41 L1548.75 896.72 L1550 894.24 L1551.25 893.21 L1552.5 894.8 L1553.75 895.04 L1555 894.62 L1556.25 895.43 L1557.5 894.06 L1558.75 894.06 L1560 895.02 L1561.25 894.49 L1562.5 894.77 L1563.75 895.59 L1565 895.84 L1566.25 894.59 L1567.5 895.33 L1568.75 894.42 L1570 895.25 L1571.25 894.72 L1572.5 896.41 L1573.75 896.41 L1575 894.4 L1576.25 895.28 L1577.5 895.12 L1578.75 893.48 L1580 893.53 L1581.25 895.41 L1582.5 894.53 L1583.75 896.14 L1585 894.57 L1586.25 896.43 L1587.5 894.81 L1588.75 893.67 L1590 893.59 L1591.25 895.68 L1592.5 895.45 L1593.75 894.66 L1595 894.6 L1596.25 894.47 L1597.5 895.09 L1598.75 890.99 L1600 893.27 L1601.36 888.55 L1603.39 895.32 L1608.14 896 L1610.85 894.84 L1616.28 896.72 L1619.67 894.86 L1627.14 895.13 L1631.89 896.73 L1635.28 895.54 L1640.71 894.37 L1644.1 889.53 L1646.81 895.03 L1650.88 897.06 L1654.27 895.7 L1662.42 895.48 L1663.5 876.34 L1664.31 875.66 L1665.13 860.73 L1665.94 874.98 L1666.49 877.69 L1667.16 893.67 L1671.23 893.94 L1675.31 895.52 L1677.34 892.72 L1681.41 891.11 L1684.8 894.01 L1686.84 880.41 L1688.2 862.77 L1688.87 861.41 L1689.55 839.7 L1690.37 838.34 L1691.18 819.35 L1692.27 814.19 L1692.81 822.06 L1693.62 823.42 L1694.3 846.49 L1695.25 849.2 L1695.66 868.2 L1697.01 872.27 L1699.05 884.48 L1701.09 895.98 L1703.8 889.47 L1705.16 894.97 L1707.19 895.02 L1709.91 888.28 L1713.3 893.74 L1715.33 892.99 L1716.96 883.12 L1717.5 858.7 L1718.05 858.02 L1719.13 838.34 L1719.67 852.59 L1720.08 853.27 L1721.03 854.63 L1721.44 876.34 L1722.8 887.19 L1724.15 893.84 L1725.51 895.76 L1729.58 895.04 L1729.99 883.12 L1730.94 871.18 L1731.61 877.69 L1732.29 879.05 L1732.97 877.69 L1734.06 893.53 L1735.69 887.19 L1737.31 880.41 L1738.4 885.83 L1739.08 892.87 L1741.79 895.75 L1745.18 893.88 L1753.32 894.43 L1756.04 894.63 L1758.07 872.27 L1759.02 869.55 L1759.84 836.99 L1760.65 835.63 L1761.19 820.03 L1761.74 851.91 L1762.55 853.95 L1763.5 885.83 L1765.54 893.26 L1768.93 895.52 L1771.64 894.34 L1775.03 892.75 L1780.46 893.81 L1782.5 884.48 L1783.85 892.61 L1789.96 895.43 L1795.39 891.7 L1798.78 886.51 L1800.14 893.67 L1802.85 888.55 L1804.88 883.8 L1805.97 892.13 L1806.92 894.13 L1807.6 879.73 L1808.28 879.05 L1809.23 862.09 L1810.31 879.05 L1810.99 894.72 L1813.03 895.82 L1818.45 893.53 L1820.49 881.09 L1821.17 847.84 L1821.71 847.16 L1822.52 823.15 L1823.34 844.45 L1823.88 845.13 L1824.56 873.62 L1825.51 885.16 L1826.32 864.12 L1827.27 841.33 L1827.95 853.27 L1828.49 853.95 L1829.31 876.34 L1831.34 892.05 L1836.09 892.16 L1838.81 887.19 L1840.16 876.34 L1840.84 839.7 L1841.52 838.34 L1842.2 809.58 L1842.88 810.12 L1843.55 814.6 L1844.23 849.2 L1845.32 850.56 L1845.86 881.76 L1846.68 883.12 L1847.49 862.77 L1848.03 861.41 L1848.58 873.62 L1849.25 861.41 L1850.07 854.36" stroke="#0808ff" stroke-width="1.3" fill="none" stroke-linejoin="round"/>
<rect x="562.1" y="793" width="2.4" height="49.7" fill="#0808ff"/>
<rect x="628.4" y="852.7" width="2.2" height="21.7" fill="#0808ff"/>
<rect x="307.2" y="762" width="2.1" height="17" fill="#0808ff"/>
<rect x="680.4" y="842.7" width="1.8" height="10.8" fill="#0808ff"/>
<rect x="758.1" y="850" width="1.7" height="6.8" fill="#0808ff"/>
<rect x="815.5" y="852" width="1.9" height="14" fill="#0808ff"/>
<rect x="468.2" y="796" width="2" height="10" fill="#0808ff"/>
<rect x="1690.6" y="822" width="2" height="24" fill="#0808ff"/>
<rect x="1718.8" y="848" width="1.6" height="10" fill="#0808ff"/>
<rect x="1759.6" y="838" width="1.8" height="14" fill="#0808ff"/>
<rect x="1842.4" y="814" width="1.6" height="32" fill="#0808ff"/>
<rect x="259.8" y="710" width="96" height="20.6" fill="none" stroke="#000" stroke-width="1.4"/>
<text x="262" y="726.6" font-size="18.2" textLength="90.5" lengthAdjust="spacing">-127.33 dB</text>
<line x1="307.9" y1="730.6" x2="307.9" y2="760.1" stroke="#000" stroke-width="1.3"/>
<path d="M302.7 748.6 H313.1 L307.9 760.4 Z" stroke="#000" stroke-width="1.3" fill="none"/>
<rect x="420.6" y="739.9" width="96" height="20.6" fill="none" stroke="#000" stroke-width="1.4"/>
<text x="422.8" y="756.5" font-size="18.2" textLength="90.5" lengthAdjust="spacing">-134.47 dB</text>
<line x1="468.4" y1="760.5" x2="468.4" y2="790.3" stroke="#000" stroke-width="1.3"/>
<path d="M463.2 778.8 H473.6 L468.4 790.6 Z" stroke="#000" stroke-width="1.3" fill="none"/>
<rect x="1.2" y="70" width="1.3" height="52" fill="#d2d2d2"/>
<rect x="2.5" y="70" width="1" height="52" fill="#fbfbfb"/>
<rect x="1.2" y="122.6" width="1.2" height="96" fill="#2a2a2a"/>
<rect x="2.4" y="122.6" width="1.2" height="50" fill="#fafafa"/>
<rect x="2.1" y="173" width="1.4" height="45" fill="#8c8c8c"/>
<rect x="3.5" y="173" width="1.3" height="45" fill="#fcfcfc"/>
<rect x="1.2" y="219.4" width="0.9" height="757" fill="#a6a09a"/>
<rect x="2.1" y="219.4" width="1.4" height="757" fill="#828282"/>
<rect x="3.5" y="219.4" width="1.1" height="757" fill="#fdfdfd"/>
<rect x="1913.1" y="68.6" width="1.7" height="53" fill="#a0a0a0"/>
<rect x="1913.3" y="122" width="1.5" height="49.6" fill="#222"/>
<rect x="1912.4" y="172.6" width="2.5" height="846" fill="#f8f8f8"/>
<rect x="2.4" y="119.2" width="1910.6" height="1.1" fill="#fafafa"/>
<rect x="2.4" y="120.3" width="1910.6" height="2.2" fill="#8c8c8c"/>
<rect x="3.4" y="122.5" width="1909.6" height="1" fill="#fafafa"/>
<rect x="3.4" y="168.4" width="1909" height="1.3" fill="#e2e2e2"/>
<rect x="2.4" y="169.7" width="1910" height="3" fill="#a0a0a0"/>
<rect x="4.6" y="172.7" width="1908" height="0.9" fill="#f8f8f8"/>
<rect x="3.5" y="217.9" width="1908.8" height="1.6" fill="#2c2c2c"/>
<rect x="3.5" y="219.5" width="1908.8" height="0.9" fill="#fbfbfb"/>
<rect x="5.2" y="71.2" width="60.2" height="47.8" fill="#111"/>
<rect x="6.6" y="72.6" width="57.4" height="45" fill="#9a9a9a"/>
<rect x="6.6" y="72.6" width="55.9" height="43.5" fill="#fafafa"/>
<rect x="7.6" y="73.6" width="54.9" height="42.5" fill="#f0f0f0"/>
<rect x="68.4" y="71.2" width="60.2" height="47.8" fill="#111"/>
<rect x="69.8" y="72.6" width="57.4" height="45" fill="#9a9a9a"/>
<rect x="69.8" y="72.6" width="55.9" height="43.5" fill="#fafafa"/>
<rect x="70.8" y="73.6" width="54.9" height="42.5" fill="#f0f0f0"/>
<path d="M16.6 88 L22.4 79.4 L32.4 95.8 L43.4 79.4 L53.6 95.8 L59.2 86.4" stroke="#000" stroke-width="1.4" fill="none" stroke-linejoin="round"/>
<text x="22.8" y="113.2" font-size="18.6" textLength="30" lengthAdjust="spacing">Run</text>
<rect x="23.4" y="114.6" width="8.6" height="1.4" fill="#000"/>
<rect x="85.4" y="79.4" width="26.4" height="14.6" fill="#a0a0a0" stroke="#000" stroke-width="1.4"/>
<text x="81" y="112" font-size="18.6" textLength="33" lengthAdjust="spacing">Stop</text>
<rect x="81.4" y="113.6" width="9.4" height="1.4" fill="#000"/>
<text x="186.6" y="101" font-size="18.3" textLength="28.6" lengthAdjust="spacing">Avg</text>
<rect x="221.6" y="78.9" width="96.7" height="32.4" fill="#fff"/>
<path d="M221.6 78.9 H318.3 L315.7 81.5 H224.2 V108.7 L221.6 111.3 Z" stroke="none" stroke-width="0" fill="#8e8e8e"/>
<rect x="221.6" y="78.9" width="95.4" height="1" fill="#a4a4a4"/>
<rect x="221.6" y="78.9" width="1" height="31.1" fill="#a4a4a4"/>
<rect x="224.2" y="81.5" width="92.8" height="28.5" fill="#fff"/>
<rect x="290.9" y="81.5" width="24.8" height="27.2" fill="#f0f0f0"/>
<rect x="290.9" y="81.5" width="24.8" height="1.3" fill="#fff"/>
<rect x="290.9" y="81.5" width="1.3" height="27.2" fill="#fff"/>
<rect x="290.9" y="106.3" width="24.8" height="2.4" fill="#8c8c8c"/>
<rect x="313.3" y="81.5" width="2.4" height="27.2" fill="#8c8c8c"/>
<rect x="292.2" y="106.3" width="21.1" height="1.1" fill="#b4b4b4"/>
<rect x="313.3" y="82.8" width="1.1" height="23.5" fill="#b4b4b4"/>
<path d="M297.8 92.9 H308.2 L303 98.3 Z" stroke="none" stroke-width="0" fill="#000"/>
<text x="227.8" y="101.6" font-size="18.3">Infinite</text>
<rect x="377.8" y="78.9" width="478.2" height="32.4" fill="#fff"/>
<path d="M377.8 78.9 H856 L853.4 81.5 H380.4 V108.7 L377.8 111.3 Z" stroke="none" stroke-width="0" fill="#8e8e8e"/>
<rect x="377.8" y="78.9" width="476.9" height="1" fill="#a4a4a4"/>
<rect x="377.8" y="78.9" width="1" height="31.1" fill="#a4a4a4"/>
<rect x="380.4" y="81.5" width="474.3" height="28.5" fill="#fff"/>
<rect x="828.6" y="81.5" width="24.8" height="27.2" fill="#f0f0f0"/>
<rect x="828.6" y="81.5" width="24.8" height="1.3" fill="#fff"/>
<rect x="828.6" y="81.5" width="1.3" height="27.2" fill="#fff"/>
<rect x="828.6" y="106.3" width="24.8" height="2.4" fill="#8c8c8c"/>
<rect x="851" y="81.5" width="2.4" height="27.2" fill="#8c8c8c"/>
<rect x="829.9" y="106.3" width="21.1" height="1.1" fill="#b4b4b4"/>
<rect x="851" y="82.8" width="1.1" height="23.5" fill="#b4b4b4"/>
<path d="M835.5 92.9 H845.9 L840.7 98.3 Z" stroke="none" stroke-width="0" fill="#000"/>
<text x="384" y="101.6" font-size="18.3">Load Configuration</text>
<rect x="5.3" y="125.3" width="41.4" height="41.4" fill="#111"/>
<rect x="6.7" y="126.7" width="38.6" height="38.6" fill="#828282"/>
<rect x="6.7" y="126.7" width="37.3" height="37.3" fill="#a6a6a6"/>
<path d="M6.7 126.7 H45.3 L42.7 129.3 H9.3 V162.7 L6.7 165.3 Z" stroke="none" stroke-width="0" fill="#fff"/>
<rect x="8" y="128" width="34.7" height="34.7" fill="#f0f0f0"/>
<rect x="50.6" y="125.3" width="41.4" height="41.4" fill="#111"/>
<rect x="52" y="126.7" width="38.6" height="38.6" fill="#828282"/>
<rect x="52" y="126.7" width="37.3" height="37.3" fill="#a6a6a6"/>
<path d="M52 126.7 H90.6 L88 129.3 H54.6 V162.7 L52 165.3 Z" stroke="none" stroke-width="0" fill="#fff"/>
<rect x="53.3" y="128" width="34.7" height="34.7" fill="#f0f0f0"/>
<rect x="95.6" y="125.3" width="41.4" height="41.4" fill="#111"/>
<rect x="97" y="126.7" width="38.6" height="38.6" fill="#828282"/>
<rect x="97" y="126.7" width="37.3" height="37.3" fill="#a6a6a6"/>
<path d="M97 126.7 H135.6 L133 129.3 H99.6 V162.7 L97 165.3 Z" stroke="none" stroke-width="0" fill="#fff"/>
<rect x="98.3" y="128" width="34.7" height="34.7" fill="#f0f0f0"/>
<rect x="152.2" y="125.3" width="41.4" height="41.4" fill="#111"/>
<rect x="153.6" y="126.7" width="38.6" height="38.6" fill="#828282"/>
<rect x="153.6" y="126.7" width="37.3" height="37.3" fill="#a6a6a6"/>
<path d="M153.6 126.7 H192.2 L189.6 129.3 H156.2 V162.7 L153.6 165.3 Z" stroke="none" stroke-width="0" fill="#fff"/>
<rect x="154.9" y="128" width="34.7" height="34.7" fill="#f0f0f0"/>
<rect x="209.8" y="125.3" width="41.4" height="41.4" fill="#111"/>
<rect x="211.2" y="126.7" width="38.6" height="38.6" fill="#828282"/>
<rect x="211.2" y="126.7" width="37.3" height="37.3" fill="#a6a6a6"/>
<path d="M211.2 126.7 H249.8 L247.2 129.3 H213.8 V162.7 L211.2 165.3 Z" stroke="none" stroke-width="0" fill="#fff"/>
<rect x="212.5" y="128" width="34.7" height="34.7" fill="#f0f0f0"/>
<rect x="255" y="125.3" width="41.4" height="41.4" fill="#111"/>
<rect x="256.4" y="126.7" width="38.6" height="38.6" fill="#fff"/>
<path d="M256.4 126.7 H295 L292.4 129.3 H259 V162.7 L256.4 165.3 Z" stroke="none" stroke-width="0" fill="#8a8a8a"/>
<rect x="259" y="129.3" width="34.7" height="34.7" fill="#f8f8f8"/>
<rect x="300" y="125.3" width="41.4" height="41.4" fill="#111"/>
<rect x="301.4" y="126.7" width="38.6" height="38.6" fill="#828282"/>
<rect x="301.4" y="126.7" width="37.3" height="37.3" fill="#a6a6a6"/>
<path d="M301.4 126.7 H340 L337.4 129.3 H304 V162.7 L301.4 165.3 Z" stroke="none" stroke-width="0" fill="#fff"/>
<rect x="302.7" y="128" width="34.7" height="34.7" fill="#f0f0f0"/>
<rect x="344.9" y="125.3" width="41.4" height="41.4" fill="#111"/>
<rect x="346.3" y="126.7" width="38.6" height="38.6" fill="#828282"/>
<rect x="346.3" y="126.7" width="37.3" height="37.3" fill="#a6a6a6"/>
<path d="M346.3 126.7 H384.9 L382.3 129.3 H348.9 V162.7 L346.3 165.3 Z" stroke="none" stroke-width="0" fill="#fff"/>
<rect x="347.6" y="128" width="34.7" height="34.7" fill="#f0f0f0"/>
<rect x="390" y="125.3" width="41.4" height="41.4" fill="#111"/>
<rect x="391.4" y="126.7" width="38.6" height="38.6" fill="#828282"/>
<rect x="391.4" y="126.7" width="37.3" height="37.3" fill="#a6a6a6"/>
<path d="M391.4 126.7 H430 L427.4 129.3 H394 V162.7 L391.4 165.3 Z" stroke="none" stroke-width="0" fill="#fff"/>
<rect x="392.7" y="128" width="34.7" height="34.7" fill="#f0f0f0"/>
<rect x="446.7" y="125.3" width="41.4" height="41.4" fill="#111"/>
<rect x="448.1" y="126.7" width="38.6" height="38.6" fill="#828282"/>
<rect x="448.1" y="126.7" width="37.3" height="37.3" fill="#a6a6a6"/>
<path d="M448.1 126.7 H486.7 L484.1 129.3 H450.7 V162.7 L448.1 165.3 Z" stroke="none" stroke-width="0" fill="#fff"/>
<rect x="449.4" y="128" width="34.7" height="34.7" fill="#f0f0f0"/>
<rect x="491.6" y="125.3" width="41.4" height="41.4" fill="#111"/>
<rect x="493" y="126.7" width="38.6" height="38.6" fill="#828282"/>
<rect x="493" y="126.7" width="37.3" height="37.3" fill="#a6a6a6"/>
<path d="M493 126.7 H531.6 L529 129.3 H495.6 V162.7 L493 165.3 Z" stroke="none" stroke-width="0" fill="#fff"/>
<rect x="494.3" y="128" width="34.7" height="34.7" fill="#f0f0f0"/>
<rect x="536.7" y="125.3" width="41.4" height="41.4" fill="#111"/>
<rect x="538.1" y="126.7" width="38.6" height="38.6" fill="#828282"/>
<rect x="538.1" y="126.7" width="37.3" height="37.3" fill="#a6a6a6"/>
<path d="M538.1 126.7 H576.7 L574.1 129.3 H540.7 V162.7 L538.1 165.3 Z" stroke="none" stroke-width="0" fill="#fff"/>
<rect x="539.4" y="128" width="34.7" height="34.7" fill="#f0f0f0"/>
<rect x="581.8" y="125.3" width="41.4" height="41.4" fill="#111"/>
<rect x="583.2" y="126.7" width="38.6" height="38.6" fill="#828282"/>
<rect x="583.2" y="126.7" width="37.3" height="37.3" fill="#a6a6a6"/>
<path d="M583.2 126.7 H621.8 L619.2 129.3 H585.8 V162.7 L583.2 165.3 Z" stroke="none" stroke-width="0" fill="#fff"/>
<rect x="584.5" y="128" width="34.7" height="34.7" fill="#f0f0f0"/>
<rect x="626.9" y="125.3" width="41.4" height="41.4" fill="#111"/>
<rect x="628.3" y="126.7" width="38.6" height="38.6" fill="#828282"/>
<rect x="628.3" y="126.7" width="37.3" height="37.3" fill="#a6a6a6"/>
<path d="M628.3 126.7 H666.9 L664.3 129.3 H630.9 V162.7 L628.3 165.3 Z" stroke="none" stroke-width="0" fill="#fff"/>
<rect x="629.6" y="128" width="34.7" height="34.7" fill="#f0f0f0"/>
<rect x="672" y="125.3" width="41.4" height="41.4" fill="#111"/>
<rect x="673.4" y="126.7" width="38.6" height="38.6" fill="#828282"/>
<rect x="673.4" y="126.7" width="37.3" height="37.3" fill="#a6a6a6"/>
<path d="M673.4 126.7 H712 L709.4 129.3 H676 V162.7 L673.4 165.3 Z" stroke="none" stroke-width="0" fill="#fff"/>
<rect x="674.7" y="128" width="34.7" height="34.7" fill="#f0f0f0"/>
<rect x="728.6" y="125.3" width="41.4" height="41.4" fill="#111"/>
<rect x="730" y="126.7" width="38.6" height="38.6" fill="#828282"/>
<rect x="730" y="126.7" width="37.3" height="37.3" fill="#a6a6a6"/>
<path d="M730 126.7 H768.6 L766 129.3 H732.6 V162.7 L730 165.3 Z" stroke="none" stroke-width="0" fill="#fff"/>
<rect x="731.3" y="128" width="34.7" height="34.7" fill="#f0f0f0"/>
<rect x="785.8" y="125.3" width="41.4" height="41.4" fill="#111"/>
<rect x="787.2" y="126.7" width="38.6" height="38.6" fill="#828282"/>
<rect x="787.2" y="126.7" width="37.3" height="37.3" fill="#a6a6a6"/>
<path d="M787.2 126.7 H825.8 L823.2 129.3 H789.8 V162.7 L787.2 165.3 Z" stroke="none" stroke-width="0" fill="#fff"/>
<rect x="788.5" y="128" width="34.7" height="34.7" fill="#f0f0f0"/>
<rect x="830.7" y="125.3" width="41.4" height="41.4" fill="#111"/>
<rect x="832.1" y="126.7" width="38.6" height="38.6" fill="#828282"/>
<rect x="832.1" y="126.7" width="37.3" height="37.3" fill="#a6a6a6"/>
<path d="M832.1 126.7 H870.7 L868.1 129.3 H834.7 V162.7 L832.1 165.3 Z" stroke="none" stroke-width="0" fill="#fff"/>
<rect x="833.4" y="128" width="34.7" height="34.7" fill="#f0f0f0"/>
<rect x="875.7" y="125.3" width="41.4" height="41.4" fill="#111"/>
<rect x="877.1" y="126.7" width="38.6" height="38.6" fill="#828282"/>
<rect x="877.1" y="126.7" width="37.3" height="37.3" fill="#a6a6a6"/>
<path d="M877.1 126.7 H915.7 L913.1 129.3 H879.7 V162.7 L877.1 165.3 Z" stroke="none" stroke-width="0" fill="#fff"/>
<rect x="878.4" y="128" width="34.7" height="34.7" fill="#f0f0f0"/>
<rect x="932.8" y="125.3" width="41.4" height="41.4" fill="#111"/>
<rect x="934.2" y="126.7" width="38.6" height="38.6" fill="#828282"/>
<rect x="934.2" y="126.7" width="37.3" height="37.3" fill="#a6a6a6"/>
<path d="M934.2 126.7 H972.8 L970.2 129.3 H936.8 V162.7 L934.2 165.3 Z" stroke="none" stroke-width="0" fill="#fff"/>
<rect x="935.5" y="128" width="34.7" height="34.7" fill="#f0f0f0"/>
<rect x="977.7" y="125.3" width="41.4" height="41.4" fill="#111"/>
<rect x="979.1" y="126.7" width="38.6" height="38.6" fill="#828282"/>
<rect x="979.1" y="126.7" width="37.3" height="37.3" fill="#a6a6a6"/>
<path d="M979.1 126.7 H1017.7 L1015.1 129.3 H981.7 V162.7 L979.1 165.3 Z" stroke="none" stroke-width="0" fill="#fff"/>
<rect x="980.4" y="128" width="34.7" height="34.7" fill="#f0f0f0"/>
<rect x="1022.7" y="125.3" width="41.4" height="41.4" fill="#111"/>
<rect x="1024.1" y="126.7" width="38.6" height="38.6" fill="#828282"/>
<rect x="1024.1" y="126.7" width="37.3" height="37.3" fill="#a6a6a6"/>
<path d="M1024.1 126.7 H1062.7 L1060.1 129.3 H1026.7 V162.7 L1024.1 165.3 Z" stroke="none" stroke-width="0" fill="#fff"/>
<rect x="1025.4" y="128" width="34.7" height="34.7" fill="#f0f0f0"/>
<rect x="1079.6" y="125.3" width="41.4" height="41.4" fill="#111"/>
<rect x="1081" y="126.7" width="38.6" height="38.6" fill="#828282"/>
<rect x="1081" y="126.7" width="37.3" height="37.3" fill="#a6a6a6"/>
<path d="M1081 126.7 H1119.6 L1117 129.3 H1083.6 V162.7 L1081 165.3 Z" stroke="none" stroke-width="0" fill="#fff"/>
<rect x="1082.3" y="128" width="34.7" height="34.7" fill="#f0f0f0"/>
<rect x="1124.8" y="125.3" width="41.4" height="41.4" fill="#111"/>
<rect x="1126.2" y="126.7" width="38.6" height="38.6" fill="#828282"/>
<rect x="1126.2" y="126.7" width="37.3" height="37.3" fill="#a6a6a6"/>
<path d="M1126.2 126.7 H1164.8 L1162.2 129.3 H1128.8 V162.7 L1126.2 165.3 Z" stroke="none" stroke-width="0" fill="#fff"/>
<rect x="1127.5" y="128" width="34.7" height="34.7" fill="#f0f0f0"/>
<rect x="1169.7" y="125.3" width="41.4" height="41.4" fill="#111"/>
<rect x="1171.1" y="126.7" width="38.6" height="38.6" fill="#828282"/>
<rect x="1171.1" y="126.7" width="37.3" height="37.3" fill="#a6a6a6"/>
<path d="M1171.1 126.7 H1209.7 L1207.1 129.3 H1173.7 V162.7 L1171.1 165.3 Z" stroke="none" stroke-width="0" fill="#fff"/>
<rect x="1172.4" y="128" width="34.7" height="34.7" fill="#f0f0f0"/>
<rect x="1226.7" y="125.3" width="41.4" height="41.4" fill="#111"/>
<rect x="1228.1" y="126.7" width="38.6" height="38.6" fill="#828282"/>
<rect x="1228.1" y="126.7" width="37.3" height="37.3" fill="#a6a6a6"/>
<path d="M1228.1 126.7 H1266.7 L1264.1 129.3 H1230.7 V162.7 L1228.1 165.3 Z" stroke="none" stroke-width="0" fill="#fff"/>
<rect x="1229.4" y="128" width="34.7" height="34.7" fill="#f0f0f0"/>
<rect x="1271.6" y="125.3" width="41.4" height="41.4" fill="#111"/>
<rect x="1273" y="126.7" width="38.6" height="38.6" fill="#828282"/>
<rect x="1273" y="126.7" width="37.3" height="37.3" fill="#a6a6a6"/>
<path d="M1273 126.7 H1311.6 L1309 129.3 H1275.6 V162.7 L1273 165.3 Z" stroke="none" stroke-width="0" fill="#fff"/>
<rect x="1274.3" y="128" width="34.7" height="34.7" fill="#f0f0f0"/>
<rect x="1328.9" y="125.3" width="41.4" height="41.4" fill="#111"/>
<rect x="1330.3" y="126.7" width="38.6" height="38.6" fill="#828282"/>
<rect x="1330.3" y="126.7" width="37.3" height="37.3" fill="#a6a6a6"/>
<path d="M1330.3 126.7 H1368.9 L1366.3 129.3 H1332.9 V162.7 L1330.3 165.3 Z" stroke="none" stroke-width="0" fill="#fff"/>
<rect x="1331.6" y="128" width="34.7" height="34.7" fill="#f0f0f0"/>
<rect x="1373.8" y="125.3" width="41.4" height="41.4" fill="#111"/>
<rect x="1375.2" y="126.7" width="38.6" height="38.6" fill="#828282"/>
<rect x="1375.2" y="126.7" width="37.3" height="37.3" fill="#a6a6a6"/>
<path d="M1375.2 126.7 H1413.8 L1411.2 129.3 H1377.8 V162.7 L1375.2 165.3 Z" stroke="none" stroke-width="0" fill="#fff"/>
<rect x="1376.5" y="128" width="34.7" height="34.7" fill="#f0f0f0"/>
<rect x="1418.6" y="125.3" width="41.4" height="41.4" fill="#111"/>
<rect x="1420" y="126.7" width="38.6" height="38.6" fill="#828282"/>
<rect x="1420" y="126.7" width="37.3" height="37.3" fill="#a6a6a6"/>
<path d="M1420 126.7 H1458.6 L1456 129.3 H1422.6 V162.7 L1420 165.3 Z" stroke="none" stroke-width="0" fill="#fff"/>
<rect x="1421.3" y="128" width="34.7" height="34.7" fill="#f0f0f0"/>
<rect x="7.2" y="175" width="41.4" height="41.4" fill="#111"/>
<rect x="8.6" y="176.4" width="38.6" height="38.6" fill="#828282"/>
<rect x="8.6" y="176.4" width="37.3" height="37.3" fill="#a6a6a6"/>
<path d="M8.6 176.4 H47.2 L44.6 179 H11.2 V212.4 L8.6 215 Z" stroke="none" stroke-width="0" fill="#fff"/>
<rect x="9.9" y="177.7" width="34.7" height="34.7" fill="#f0f0f0"/>
<rect x="52.4" y="175" width="41.4" height="41.4" fill="#111"/>
<rect x="53.8" y="176.4" width="38.6" height="38.6" fill="#828282"/>
<rect x="53.8" y="176.4" width="37.3" height="37.3" fill="#a6a6a6"/>
<path d="M53.8 176.4 H92.4 L89.8 179 H56.4 V212.4 L53.8 215 Z" stroke="none" stroke-width="0" fill="#fff"/>
<rect x="55.1" y="177.7" width="34.7" height="34.7" fill="#f0f0f0"/>
<rect x="97.3" y="175" width="41.4" height="41.4" fill="#111"/>
<rect x="98.7" y="176.4" width="38.6" height="38.6" fill="#828282"/>
<rect x="98.7" y="176.4" width="37.3" height="37.3" fill="#a6a6a6"/>
<path d="M98.7 176.4 H137.3 L134.7 179 H101.3 V212.4 L98.7 215 Z" stroke="none" stroke-width="0" fill="#fff"/>
<rect x="100" y="177.7" width="34.7" height="34.7" fill="#f0f0f0"/>
<rect x="142.1" y="175" width="41.4" height="41.4" fill="#111"/>
<rect x="143.5" y="176.4" width="38.6" height="38.6" fill="#828282"/>
<rect x="143.5" y="176.4" width="37.3" height="37.3" fill="#a6a6a6"/>
<path d="M143.5 176.4 H182.1 L179.5 179 H146.1 V212.4 L143.5 215 Z" stroke="none" stroke-width="0" fill="#fff"/>
<rect x="144.8" y="177.7" width="34.7" height="34.7" fill="#f0f0f0"/>
<rect x="197.8" y="175" width="41.4" height="41.4" fill="#111"/>
<rect x="199.2" y="176.4" width="38.6" height="38.6" fill="#fff"/>
<path d="M199.2 176.4 H237.8 L235.2 179 H201.8 V212.4 L199.2 215 Z" stroke="none" stroke-width="0" fill="#8a8a8a"/>
<rect x="201.8" y="179" width="34.7" height="34.7" fill="#f8f8f8"/>
<rect x="243" y="175" width="41.4" height="41.4" fill="#111"/>
<rect x="244.4" y="176.4" width="38.6" height="38.6" fill="#828282"/>
<rect x="244.4" y="176.4" width="37.3" height="37.3" fill="#a6a6a6"/>
<path d="M244.4 176.4 H283 L280.4 179 H247 V212.4 L244.4 215 Z" stroke="none" stroke-width="0" fill="#fff"/>
<rect x="245.7" y="177.7" width="34.7" height="34.7" fill="#f0f0f0"/>
<rect x="287.8" y="175" width="41.4" height="41.4" fill="#111"/>
<rect x="289.2" y="176.4" width="38.6" height="38.6" fill="#828282"/>
<rect x="289.2" y="176.4" width="37.3" height="37.3" fill="#a6a6a6"/>
<path d="M289.2 176.4 H327.8 L325.2 179 H291.8 V212.4 L289.2 215 Z" stroke="none" stroke-width="0" fill="#fff"/>
<rect x="290.5" y="177.7" width="34.7" height="34.7" fill="#f0f0f0"/>
<rect x="343.3" y="175" width="41.4" height="41.4" fill="#111"/>
<rect x="344.7" y="176.4" width="38.6" height="38.6" fill="#828282"/>
<rect x="344.7" y="176.4" width="37.3" height="37.3" fill="#a6a6a6"/>
<path d="M344.7 176.4 H383.3 L380.7 179 H347.3 V212.4 L344.7 215 Z" stroke="none" stroke-width="0" fill="#fff"/>
<rect x="346" y="177.7" width="34.7" height="34.7" fill="#f0f0f0"/>
<rect x="388.4" y="175" width="41.4" height="41.4" fill="#111"/>
<rect x="389.8" y="176.4" width="38.6" height="38.6" fill="#828282"/>
<rect x="389.8" y="176.4" width="37.3" height="37.3" fill="#a6a6a6"/>
<path d="M389.8 176.4 H428.4 L425.8 179 H392.4 V212.4 L389.8 215 Z" stroke="none" stroke-width="0" fill="#fff"/>
<rect x="391.1" y="177.7" width="34.7" height="34.7" fill="#f0f0f0"/>
<rect x="443.9" y="175" width="41.4" height="41.4" fill="#111"/>
<rect x="445.3" y="176.4" width="38.6" height="38.6" fill="#828282"/>
<rect x="445.3" y="176.4" width="37.3" height="37.3" fill="#a6a6a6"/>
<path d="M445.3 176.4 H483.9 L481.3 179 H447.9 V212.4 L445.3 215 Z" stroke="none" stroke-width="0" fill="#fff"/>
<rect x="446.6" y="177.7" width="34.7" height="34.7" fill="#f0f0f0"/>
<text x="499.4" y="202.6" font-size="18.3" textLength="71" lengthAdjust="spacing">Plot Top:</text>
<rect x="576.25" y="181.35" width="82.3" height="28.3" fill="#fff" stroke="#7a7a7a" stroke-width="1.3"/>
<text x="579.6" y="201.6" font-size="18.3">0.00</text>
<rect x="662.8" y="180.9" width="17.2" height="14.5" fill="#f0f0f0"/>
<rect x="662.8" y="180.9" width="17.2" height="1.3" fill="#fff"/>
<rect x="662.8" y="180.9" width="1.3" height="14.5" fill="#fff"/>
<rect x="662.8" y="193" width="17.2" height="2.4" fill="#8c8c8c"/>
<rect x="677.6" y="180.9" width="2.4" height="14.5" fill="#8c8c8c"/>
<rect x="664.1" y="193" width="13.5" height="1.1" fill="#b4b4b4"/>
<rect x="677.6" y="182.2" width="1.1" height="10.8" fill="#b4b4b4"/>
<path d="M668.4 189.7 H673.6 L671 186.7 Z" stroke="none" stroke-width="0" fill="#000"/>
<rect x="662.8" y="195.7" width="17.2" height="14.5" fill="#f0f0f0"/>
<rect x="662.8" y="195.7" width="17.2" height="1.3" fill="#fff"/>
<rect x="662.8" y="195.7" width="1.3" height="14.5" fill="#fff"/>
<rect x="662.8" y="207.8" width="17.2" height="2.4" fill="#8c8c8c"/>
<rect x="677.6" y="195.7" width="2.4" height="14.5" fill="#8c8c8c"/>
<rect x="664.1" y="207.8" width="13.5" height="1.1" fill="#b4b4b4"/>
<rect x="677.6" y="197" width="1.1" height="10.8" fill="#b4b4b4"/>
<path d="M668.4 201.5 H673.6 L671 204.5 Z" stroke="none" stroke-width="0" fill="#000"/>
<text x="694.6" y="202.6" font-size="18.3" textLength="95.4" lengthAdjust="spacing">Plot Range:</text>
<rect x="795.45" y="181.35" width="82.1" height="28.3" fill="#fff" stroke="#7a7a7a" stroke-width="1.3"/>
<text x="798.4" y="201.6" font-size="18.3">165.0</text>
<rect x="881.4" y="180.9" width="17.2" height="14.5" fill="#f0f0f0"/>
<rect x="881.4" y="180.9" width="17.2" height="1.3" fill="#fff"/>
<rect x="881.4" y="180.9" width="1.3" height="14.5" fill="#fff"/>
<rect x="881.4" y="193" width="17.2" height="2.4" fill="#8c8c8c"/>
<rect x="896.2" y="180.9" width="2.4" height="14.5" fill="#8c8c8c"/>
<rect x="882.7" y="193" width="13.5" height="1.1" fill="#b4b4b4"/>
<rect x="896.2" y="182.2" width="1.1" height="10.8" fill="#b4b4b4"/>
<path d="M887 189.7 H892.2 L889.6 186.7 Z" stroke="none" stroke-width="0" fill="#000"/>
<rect x="881.4" y="195.7" width="17.2" height="14.5" fill="#f0f0f0"/>
<rect x="881.4" y="195.7" width="17.2" height="1.3" fill="#fff"/>
<rect x="881.4" y="195.7" width="1.3" height="14.5" fill="#fff"/>
<rect x="881.4" y="207.8" width="17.2" height="2.4" fill="#8c8c8c"/>
<rect x="896.2" y="195.7" width="2.4" height="14.5" fill="#8c8c8c"/>
<rect x="882.7" y="207.8" width="13.5" height="1.1" fill="#b4b4b4"/>
<rect x="896.2" y="197" width="1.1" height="10.8" fill="#b4b4b4"/>
<path d="M887 201.5 H892.2 L889.6 204.5 Z" stroke="none" stroke-width="0" fill="#000"/>
<text x="919.8" y="204.2" font-size="18.3" textLength="88.8" lengthAdjust="spacing">Peak Hold:</text>
<rect x="1013.9" y="179.6" width="105.7" height="32.1" fill="#fff"/>
<path d="M1013.9 179.6 H1119.6 L1117 182.2 H1016.5 V209.1 L1013.9 211.7 Z" stroke="none" stroke-width="0" fill="#8e8e8e"/>
<rect x="1013.9" y="179.6" width="104.4" height="1" fill="#a4a4a4"/>
<rect x="1013.9" y="179.6" width="1" height="30.8" fill="#a4a4a4"/>
<rect x="1016.5" y="182.2" width="101.8" height="28.2" fill="#fff"/>
<rect x="1092.2" y="182.2" width="24.8" height="26.9" fill="#f0f0f0"/>
<rect x="1092.2" y="182.2" width="24.8" height="1.3" fill="#fff"/>
<rect x="1092.2" y="182.2" width="1.3" height="26.9" fill="#fff"/>
<rect x="1092.2" y="206.7" width="24.8" height="2.4" fill="#8c8c8c"/>
<rect x="1114.6" y="182.2" width="2.4" height="26.9" fill="#8c8c8c"/>
<rect x="1093.5" y="206.7" width="21.1" height="1.1" fill="#b4b4b4"/>
<rect x="1114.6" y="183.5" width="1.1" height="23.2" fill="#b4b4b4"/>
<path d="M1099.1 193.45 H1109.5 L1104.3 198.85 Z" stroke="none" stroke-width="0" fill="#000"/>
<text x="1020.1" y="202.15" font-size="18.3">Off</text>
<text x="452" y="151.2" font-size="18.4" textLength="29.5" class="s" lengthAdjust="spacingAndGlyphs" stroke="#000" stroke-width="0.3">FFT</text>
<text x="586" y="152" font-size="19.8" textLength="31.5" class="s" lengthAdjust="spacingAndGlyphs" stroke="#000" stroke-width="0.3">Trig</text>
<text x="633.6" y="142" font-size="16.6" textLength="28.1" class="s" lengthAdjust="spacingAndGlyphs" stroke="#000" stroke-width="0.3">Run</text>
<text x="633.6" y="157.4" font-size="16.6" textLength="27.9" class="s" lengthAdjust="spacingAndGlyphs" stroke="#000" stroke-width="0.3">Ctrl</text>
<text x="680.1" y="151.7" font-size="19.2" textLength="25.1" class="s" lengthAdjust="spacingAndGlyphs" stroke="#000" stroke-width="0.3">I/O</text>
<text x="795.4" y="151.7" font-size="19.2" textLength="22.3" class="s" lengthAdjust="spacingAndGlyphs" stroke="#000" stroke-width="0.3">Hz</text>
<text x="840.4" y="151.7" font-size="19.2" textLength="21" class="s" lengthAdjust="spacingAndGlyphs" stroke="#000" stroke-width="0.3">dB</text>
<text x="879.1" y="151.7" font-size="19.2" textLength="30.9" class="s" lengthAdjust="spacingAndGlyphs" stroke="#000" stroke-width="0.3">Pwr</text>
<text x="936.8" y="151.7" font-size="19.2" textLength="30.7" class="s" lengthAdjust="spacingAndGlyphs" stroke="#000" stroke-width="0.3">THD</text>
<text x="982.1" y="142.4" font-size="16.4" textLength="30.4" class="s" lengthAdjust="spacingAndGlyphs" stroke="#000" stroke-width="0.3">THD</text>
<text x="985" y="158.4" font-size="16.4" textLength="20.2" class="s" lengthAdjust="spacingAndGlyphs" stroke="#000" stroke-width="0.3">+N</text>
<text x="1028.6" y="140.6" font-size="16.4" textLength="30.5" class="s" lengthAdjust="spacingAndGlyphs" stroke="#000" stroke-width="0.3">THD</text>
<text x="1028" y="155.7" font-size="16.4" textLength="30.4" class="s" lengthAdjust="spacingAndGlyphs" stroke="#000" stroke-width="0.3">Freq</text>
<text x="1083.3" y="151.7" font-size="19.2" textLength="33" class="s" lengthAdjust="spacingAndGlyphs" stroke="#000" stroke-width="0.3">IMD</text>
<text x="1128.2" y="151.7" font-size="19.2" textLength="33.2" class="s" lengthAdjust="spacingAndGlyphs" stroke="#000" stroke-width="0.3">SNR</text>
<text x="1174.8" y="151.7" font-size="19.2" textLength="31.3" class="s" lengthAdjust="spacingAndGlyphs" stroke="#000" stroke-width="0.3">Leq</text>
<text x="1230.4" y="151.7" font-size="19.2" textLength="33.6" class="s" lengthAdjust="spacingAndGlyphs" stroke="#000" stroke-width="0.3">Mac</text>
<text x="1276.9" y="151.7" font-size="19.2" textLength="31.7" class="s" lengthAdjust="spacingAndGlyphs" stroke="#000" stroke-width="0.3">Log</text>
<text x="1334.9" y="151.7" font-size="19.2" textLength="28.2" class="s" lengthAdjust="spacingAndGlyphs" stroke="#000" stroke-width="0.3">Dly</text>
<text x="1377.1" y="151.7" font-size="19.2" textLength="33.4" class="s" lengthAdjust="spacingAndGlyphs" stroke="#000" stroke-width="0.3">Rvb</text>
<text x="1423.1" y="151.7" font-size="19.2" textLength="29.6" class="s" lengthAdjust="spacingAndGlyphs" stroke="#000" stroke-width="0.3">Scp</text>
<text x="392" y="201.6" font-size="19.8" textLength="32.6" class="s" lengthAdjust="spacingAndGlyphs" stroke="#000" stroke-width="0.3">Mrk</text>
<rect x="1.1" y="977.6" width="1912.6" height="4.2" fill="#fff"/>
<rect x="1.1" y="976.4" width="1912.6" height="1.2" fill="#f6f6f6"/>
<rect x="5.5" y="983.6" width="177" height="1.3" fill="#a0a0a0"/>
<rect x="5.5" y="983.6" width="1.3" height="25.6" fill="#a0a0a0"/>
<rect x="6.8" y="1008" width="175.7" height="1.2" fill="#fdfdfd"/>
<rect x="181.3" y="984.9" width="1.2" height="24.3" fill="#fdfdfd"/>
<text x="11.7" y="1002.8" font-size="18.3">Running...</text>
<rect x="186" y="983.6" width="151" height="1.3" fill="#a0a0a0"/>
<rect x="186" y="983.6" width="1.3" height="25.6" fill="#a0a0a0"/>
<rect x="187.3" y="1008" width="149.7" height="1.2" fill="#fdfdfd"/>
<rect x="335.8" y="984.9" width="1.2" height="24.3" fill="#fdfdfd"/>
<text x="192.2" y="1002.8" font-size="18.3">Real Time</text>
<rect x="340" y="983.6" width="106" height="1.3" fill="#a0a0a0"/>
<rect x="340" y="983.6" width="1.3" height="25.6" fill="#a0a0a0"/>
<rect x="341.3" y="1008" width="104.7" height="1.2" fill="#fdfdfd"/>
<rect x="444.8" y="984.9" width="1.2" height="24.3" fill="#fdfdfd"/>
<text x="346.2" y="1002.8" font-size="18.3">192000 Hz</text>
<rect x="450" y="983.6" width="75.7" height="1.3" fill="#a0a0a0"/>
<rect x="450" y="983.6" width="1.3" height="25.6" fill="#a0a0a0"/>
<rect x="451.3" y="1008" width="74.4" height="1.2" fill="#fdfdfd"/>
<rect x="524.5" y="984.9" width="1.2" height="24.3" fill="#fdfdfd"/>
<text x="456.2" y="1002.8" font-size="18.3">24 Bit</text>
<rect x="529.7" y="983.6" width="75.7" height="1.3" fill="#a0a0a0"/>
<rect x="529.7" y="983.6" width="1.3" height="25.6" fill="#a0a0a0"/>
<rect x="531" y="1008" width="74.4" height="1.2" fill="#fdfdfd"/>
<rect x="604.2" y="984.9" width="1.2" height="24.3" fill="#fdfdfd"/>
<text x="535.9" y="1002.8" font-size="18.3">Mono</text>
<rect x="609.2" y="983.6" width="150.3" height="1.3" fill="#a0a0a0"/>
<rect x="609.2" y="983.6" width="1.3" height="25.6" fill="#a0a0a0"/>
<rect x="610.5" y="1008" width="149" height="1.2" fill="#fdfdfd"/>
<rect x="758.3" y="984.9" width="1.2" height="24.3" fill="#fdfdfd"/>
<text x="615.4" y="1002.8" font-size="18.3">FFT 524288 pts</text>
<rect x="763.3" y="983.6" width="109" height="1.3" fill="#a0a0a0"/>
<rect x="763.3" y="983.6" width="1.3" height="25.6" fill="#a0a0a0"/>
<rect x="764.6" y="1008" width="107.7" height="1.2" fill="#fdfdfd"/>
<rect x="871.1" y="984.9" width="1.2" height="24.3" fill="#fdfdfd"/>
<text x="769.5" y="1002.8" font-size="18.3">Hanning</text>
<rect x="876.4" y="983.6" width="1035.3" height="1.3" fill="#a0a0a0"/>
<rect x="876.4" y="983.6" width="1.3" height="25.6" fill="#a0a0a0"/>
<rect x="877.7" y="1008" width="1034" height="1.2" fill="#fdfdfd"/>
<rect x="1910.5" y="984.9" width="1.2" height="24.3" fill="#fdfdfd"/>
<rect x="880.2" y="986.2" width="4.6" height="9.4" fill="rgb(0,236,0)"/>
<rect x="884.8" y="986.2" width="1.4" height="9.4" fill="rgb(90,140,80)"/>
<rect x="886.2" y="986.2" width="4.6" height="9.4" fill="rgb(0,236,0)"/>
<rect x="890.8" y="986.2" width="1.4" height="9.4" fill="rgb(90,140,80)"/>
<rect x="892.2" y="986.2" width="4.6" height="9.4" fill="rgb(0,236,0)"/>
<rect x="896.8" y="986.2" width="1.4" height="9.4" fill="rgb(90,140,80)"/>
<rect x="898.2" y="986.2" width="4.6" height="9.4" fill="rgb(0,236,0)"/>
<rect x="902.8" y="986.2" width="1.4" height="9.4" fill="rgb(90,140,80)"/>
<rect x="904.2" y="986.2" width="4.6" height="9.4" fill="rgb(0,236,0)"/>
<rect x="908.8" y="986.2" width="1.4" height="9.4" fill="rgb(90,140,80)"/>
<rect x="910.2" y="986.2" width="4.6" height="9.4" fill="rgb(0,236,0)"/>
<rect x="914.8" y="986.2" width="1.4" height="9.4" fill="rgb(90,140,80)"/>
<rect x="916.2" y="986.2" width="4.6" height="9.4" fill="rgb(0,236,0)"/>
<rect x="920.8" y="986.2" width="1.4" height="9.4" fill="rgb(90,140,80)"/>
<rect x="922.2" y="986.2" width="4.6" height="9.4" fill="rgb(0,236,0)"/>
<rect x="926.8" y="986.2" width="1.4" height="9.4" fill="rgb(90,140,80)"/>
<rect x="928.2" y="986.2" width="4.6" height="9.4" fill="rgb(0,236,0)"/>
<rect x="932.8" y="986.2" width="1.4" height="9.4" fill="rgb(90,140,80)"/>
<rect x="934.2" y="986.2" width="4.6" height="9.4" fill="rgb(0,236,0)"/>
<rect x="938.8" y="986.2" width="1.4" height="9.4" fill="rgb(90,140,80)"/>
<rect x="940.2" y="986.2" width="4.6" height="9.4" fill="rgb(0,236,0)"/>
<rect x="944.8" y="986.2" width="1.4" height="9.4" fill="rgb(90,140,80)"/>
<rect x="946.2" y="986.2" width="4.6" height="9.4" fill="rgb(0,236,0)"/>
<rect x="950.8" y="986.2" width="1.4" height="9.4" fill="rgb(90,140,80)"/>
<rect x="952.2" y="986.2" width="4.6" height="9.4" fill="rgb(0,236,0)"/>
<rect x="956.8" y="986.2" width="1.4" height="9.4" fill="rgb(90,140,80)"/>
<rect x="958.2" y="986.2" width="4.6" height="9.4" fill="rgb(0,236,0)"/>
<rect x="962.8" y="986.2" width="1.4" height="9.4" fill="rgb(90,140,80)"/>
<rect x="964.2" y="986.2" width="4.6" height="9.4" fill="rgb(0,236,0)"/>
<rect x="968.8" y="986.2" width="1.4" height="9.4" fill="rgb(90,140,80)"/>
<rect x="970.2" y="986.2" width="4.6" height="9.4" fill="rgb(0,236,0)"/>
<rect x="974.8" y="986.2" width="1.4" height="9.4" fill="rgb(90,140,80)"/>
<rect x="976.2" y="986.2" width="4.6" height="9.4" fill="rgb(0,236,0)"/>
<rect x="980.8" y="986.2" width="1.4" height="9.4" fill="rgb(90,140,80)"/>
<rect x="982.2" y="986.2" width="4.6" height="9.4" fill="rgb(0,236,0)"/>
<rect x="986.8" y="986.2" width="1.4" height="9.4" fill="rgb(90,140,80)"/>
<rect x="988.2" y="986.2" width="4.6" height="9.4" fill="rgb(0,236,0)"/>
<rect x="992.8" y="986.2" width="1.4" height="9.4" fill="rgb(90,140,80)"/>
<rect x="994.2" y="986.2" width="4.6" height="9.4" fill="rgb(0,236,0)"/>
<rect x="998.8" y="986.2" width="1.4" height="9.4" fill="rgb(90,140,80)"/>
<rect x="1000.2" y="986.2" width="4.6" height="9.4" fill="rgb(0,236,0)"/>
<rect x="1004.8" y="986.2" width="1.4" height="9.4" fill="rgb(90,140,80)"/>
<rect x="1006.2" y="986.2" width="4.6" height="9.4" fill="rgb(0,236,0)"/>
<rect x="1010.8" y="986.2" width="1.4" height="9.4" fill="rgb(90,140,80)"/>
<rect x="1012.2" y="986.2" width="4.6" height="9.4" fill="rgb(0,236,0)"/>
<rect x="1016.8" y="986.2" width="1.4" height="9.4" fill="rgb(90,140,80)"/>
<rect x="1018.2" y="986.2" width="4.6" height="9.4" fill="rgb(0,236,0)"/>
<rect x="1022.8" y="986.2" width="1.4" height="9.4" fill="rgb(90,140,80)"/>
<rect x="1024.2" y="986.2" width="4.6" height="9.4" fill="rgb(0,236,0)"/>
<rect x="1028.8" y="986.2" width="1.4" height="9.4" fill="rgb(90,140,80)"/>
<rect x="1030.2" y="986.2" width="4.6" height="9.4" fill="rgb(0,236,0)"/>
<rect x="1034.8" y="986.2" width="1.4" height="9.4" fill="rgb(90,140,80)"/>
<rect x="1036.2" y="986.2" width="4.6" height="9.4" fill="rgb(0,236,0)"/>
<rect x="1040.8" y="986.2" width="1.4" height="9.4" fill="rgb(90,140,80)"/>
<rect x="1042.2" y="986.2" width="4.6" height="9.4" fill="rgb(0,236,0)"/>
<rect x="1046.8" y="986.2" width="1.4" height="9.4" fill="rgb(90,140,80)"/>
<rect x="1048.2" y="986.2" width="4.6" height="9.4" fill="rgb(0,236,0)"/>
<rect x="1052.8" y="986.2" width="1.4" height="9.4" fill="rgb(90,140,80)"/>
<rect x="1054.2" y="986.2" width="4.6" height="9.4" fill="rgb(0,236,0)"/>
<rect x="1058.8" y="986.2" width="1.4" height="9.4" fill="rgb(90,140,80)"/>
<rect x="1060.2" y="986.2" width="4.6" height="9.4" fill="rgb(0,236,0)"/>
<rect x="1064.8" y="986.2" width="1.4" height="9.4" fill="rgb(90,140,80)"/>
<rect x="1066.2" y="986.2" width="4.6" height="9.4" fill="rgb(0,236,0)"/>
<rect x="1070.8" y="986.2" width="1.4" height="9.4" fill="rgb(90,140,80)"/>
<rect x="1072.2" y="986.2" width="4.6" height="9.4" fill="rgb(0,236,0)"/>
<rect x="1076.8" y="986.2" width="1.4" height="9.4" fill="rgb(90,140,80)"/>
<rect x="1078.2" y="986.2" width="4.6" height="9.4" fill="rgb(0,236,0)"/>
<rect x="1082.8" y="986.2" width="1.4" height="9.4" fill="rgb(90,140,80)"/>
<rect x="1084.2" y="986.2" width="4.6" height="9.4" fill="rgb(0,236,0)"/>
<rect x="1088.8" y="986.2" width="1.4" height="9.4" fill="rgb(90,140,80)"/>
<rect x="1090.2" y="986.2" width="4.6" height="9.4" fill="rgb(0,236,0)"/>
<rect x="1094.8" y="986.2" width="1.4" height="9.4" fill="rgb(90,140,80)"/>
<rect x="1096.2" y="986.2" width="4.6" height="9.4" fill="rgb(0,236,0)"/>
<rect x="1100.8" y="986.2" width="1.4" height="9.4" fill="rgb(90,140,80)"/>
<rect x="1102.2" y="986.2" width="4.6" height="9.4" fill="rgb(0,236,0)"/>
<rect x="1106.8" y="986.2" width="1.4" height="9.4" fill="rgb(90,140,80)"/>
<rect x="1108.2" y="986.2" width="4.6" height="9.4" fill="rgb(0,236,0)"/>
<rect x="1112.8" y="986.2" width="1.4" height="9.4" fill="rgb(90,140,80)"/>
<rect x="1114.2" y="986.2" width="4.6" height="9.4" fill="rgb(0,236,0)"/>
<rect x="1118.8" y="986.2" width="1.4" height="9.4" fill="rgb(90,140,80)"/>
<rect x="1120.2" y="986.2" width="4.6" height="9.4" fill="rgb(0,236,0)"/>
<rect x="1124.8" y="986.2" width="1.4" height="9.4" fill="rgb(90,140,80)"/>
<rect x="1126.2" y="986.2" width="4.6" height="9.4" fill="rgb(0,236,0)"/>
<rect x="1130.8" y="986.2" width="1.4" height="9.4" fill="rgb(90,140,80)"/>
<rect x="1132.2" y="986.2" width="4.6" height="9.4" fill="rgb(0,236,0)"/>
<rect x="1136.8" y="986.2" width="1.4" height="9.4" fill="rgb(90,140,80)"/>
<rect x="1138.2" y="986.2" width="4.6" height="9.4" fill="rgb(0,236,0)"/>
<rect x="1142.8" y="986.2" width="1.4" height="9.4" fill="rgb(90,140,80)"/>
<rect x="1144.2" y="986.2" width="4.6" height="9.4" fill="rgb(0,236,0)"/>
<rect x="1148.8" y="986.2" width="1.4" height="9.4" fill="rgb(90,140,80)"/>
<rect x="1150.2" y="986.2" width="4.6" height="9.4" fill="rgb(0,236,0)"/>
<rect x="1154.8" y="986.2" width="1.4" height="9.4" fill="rgb(90,140,80)"/>
<rect x="1156.2" y="986.2" width="4.6" height="9.4" fill="rgb(0,236,0)"/>
<rect x="1160.8" y="986.2" width="1.4" height="9.4" fill="rgb(90,140,80)"/>
<rect x="1162.2" y="986.2" width="4.6" height="9.4" fill="rgb(0,236,0)"/>
<rect x="1166.8" y="986.2" width="1.4" height="9.4" fill="rgb(90,140,80)"/>
<rect x="1168.2" y="986.2" width="4.6" height="9.4" fill="rgb(0,236,0)"/>
<rect x="1172.8" y="986.2" width="1.4" height="9.4" fill="rgb(90,140,80)"/>
<rect x="1174.2" y="986.2" width="4.6" height="9.4" fill="rgb(0,236,0)"/>
<rect x="1178.8" y="986.2" width="1.4" height="9.4" fill="rgb(90,140,80)"/>
<rect x="1180.2" y="986.2" width="4.6" height="9.4" fill="rgb(0,235,0)"/>
<rect x="1184.8" y="986.2" width="1.4" height="9.4" fill="rgb(90,140,80)"/>
<rect x="1186.2" y="986.2" width="4.6" height="9.4" fill="rgb(3,235,0)"/>
<rect x="1190.8" y="986.2" width="1.4" height="9.4" fill="rgb(90,140,80)"/>
<rect x="1192.2" y="986.2" width="4.6" height="9.4" fill="rgb(7,234,0)"/>
<rect x="1196.8" y="986.2" width="1.4" height="9.4" fill="rgb(91,140,80)"/>
<rect x="1198.2" y="986.2" width="4.6" height="9.4" fill="rgb(10,233,0)"/>
<rect x="1202.8" y="986.2" width="1.4" height="9.4" fill="rgb(92,140,80)"/>
<rect x="1204.2" y="986.2" width="4.6" height="9.4" fill="rgb(14,233,0)"/>
<rect x="1208.8" y="986.2" width="1.4" height="9.4" fill="rgb(93,140,80)"/>
<rect x="1210.2" y="986.2" width="4.6" height="9.4" fill="rgb(17,232,0)"/>
<rect x="1214.8" y="986.2" width="1.4" height="9.4" fill="rgb(94,140,80)"/>
<rect x="1216.2" y="986.2" width="4.6" height="9.4" fill="rgb(21,231,0)"/>
<rect x="1220.8" y="986.2" width="1.4" height="9.4" fill="rgb(95,140,80)"/>
<rect x="1222.2" y="986.2" width="4.6" height="9.4" fill="rgb(24,230,0)"/>
<rect x="1226.8" y="986.2" width="1.4" height="9.4" fill="rgb(96,140,80)"/>
<rect x="1228.2" y="986.2" width="4.6" height="9.4" fill="rgb(28,230,0)"/>
<rect x="1232.8" y="986.2" width="1.4" height="9.4" fill="rgb(97,140,80)"/>
<rect x="1234.2" y="986.2" width="4.6" height="9.4" fill="rgb(31,229,0)"/>
<rect x="1238.8" y="986.2" width="1.4" height="9.4" fill="rgb(97,140,80)"/>
<rect x="1240.2" y="986.2" width="4.6" height="9.4" fill="rgb(35,228,0)"/>
<rect x="1244.8" y="986.2" width="1.4" height="9.4" fill="rgb(98,140,80)"/>
<rect x="1246.2" y="986.2" width="4.6" height="9.4" fill="rgb(38,227,0)"/>
<rect x="1250.8" y="986.2" width="1.4" height="9.4" fill="rgb(99,140,80)"/>
<rect x="1252.2" y="986.2" width="4.6" height="9.4" fill="rgb(41,227,0)"/>
<rect x="1256.8" y="986.2" width="1.4" height="9.4" fill="rgb(100,140,80)"/>
<rect x="1258.2" y="986.2" width="4.6" height="9.4" fill="rgb(45,226,0)"/>
<rect x="1262.8" y="986.2" width="1.4" height="9.4" fill="rgb(101,140,80)"/>
<rect x="1264.2" y="986.2" width="4.6" height="9.4" fill="rgb(48,225,0)"/>
<rect x="1268.8" y="986.2" width="1.4" height="9.4" fill="rgb(102,140,80)"/>
<rect x="1270.2" y="986.2" width="4.6" height="9.4" fill="rgb(52,225,0)"/>
<rect x="1274.8" y="986.2" width="1.4" height="9.4" fill="rgb(103,140,80)"/>
<rect x="1276.2" y="986.2" width="4.6" height="9.4" fill="rgb(55,224,0)"/>
<rect x="1280.8" y="986.2" width="1.4" height="9.4" fill="rgb(103,140,80)"/>
<rect x="1282.2" y="986.2" width="4.6" height="9.4" fill="rgb(59,223,0)"/>
<rect x="1286.8" y="986.2" width="1.4" height="9.4" fill="rgb(104,140,80)"/>
<rect x="1288.2" y="986.2" width="4.6" height="9.4" fill="rgb(62,222,0)"/>
<rect x="1292.8" y="986.2" width="1.4" height="9.4" fill="rgb(105,140,80)"/>
<rect x="1294.2" y="986.2" width="4.6" height="9.4" fill="rgb(66,222,0)"/>
<rect x="1298.8" y="986.2" width="1.4" height="9.4" fill="rgb(106,140,80)"/>
<rect x="1300.2" y="986.2" width="4.6" height="9.4" fill="rgb(69,221,0)"/>
<rect x="1304.8" y="986.2" width="1.4" height="9.4" fill="rgb(107,140,80)"/>
<rect x="1306.2" y="986.2" width="4.6" height="9.4" fill="rgb(73,220,0)"/>
<rect x="1310.8" y="986.2" width="1.4" height="9.4" fill="rgb(108,140,80)"/>
<rect x="1312.2" y="986.2" width="4.6" height="9.4" fill="rgb(76,220,0)"/>
<rect x="1316.8" y="986.2" width="1.4" height="9.4" fill="rgb(109,140,80)"/>
<rect x="1318.2" y="986.2" width="4.6" height="9.4" fill="rgb(80,219,0)"/>
<rect x="1322.8" y="986.2" width="1.4" height="9.4" fill="rgb(110,140,80)"/>
<rect x="1324.2" y="986.2" width="4.6" height="9.4" fill="rgb(83,218,0)"/>
<rect x="1328.8" y="986.2" width="1.4" height="9.4" fill="rgb(110,140,80)"/>
<rect x="1330.2" y="986.2" width="4.6" height="9.4" fill="rgb(87,217,0)"/>
<rect x="1334.8" y="986.2" width="1.4" height="9.4" fill="rgb(111,140,80)"/>
<rect x="1336.2" y="986.2" width="4.6" height="9.4" fill="rgb(90,217,0)"/>
<rect x="1340.8" y="986.2" width="1.4" height="9.4" fill="rgb(112,140,80)"/>
<rect x="1342.2" y="986.2" width="4.6" height="9.4" fill="rgb(94,216,0)"/>
<rect x="1346.8" y="986.2" width="1.4" height="9.4" fill="rgb(113,140,80)"/>
<rect x="1348.2" y="986.2" width="4.6" height="9.4" fill="rgb(97,215,0)"/>
<rect x="1352.8" y="986.2" width="1.4" height="9.4" fill="rgb(114,140,80)"/>
<rect x="1354.2" y="986.2" width="4.6" height="9.4" fill="rgb(101,214,0)"/>
<rect x="1358.8" y="986.2" width="1.4" height="9.4" fill="rgb(115,140,80)"/>
<rect x="1360.2" y="986.2" width="4.6" height="9.4" fill="rgb(104,214,0)"/>
<rect x="1364.8" y="986.2" width="1.4" height="9.4" fill="rgb(116,140,80)"/>
<rect x="1366.2" y="986.2" width="4.6" height="9.4" fill="rgb(108,213,0)"/>
<rect x="1370.8" y="986.2" width="1.4" height="9.4" fill="rgb(117,140,80)"/>
<rect x="1372.2" y="986.2" width="4.6" height="9.4" fill="rgb(111,212,0)"/>
<rect x="1376.8" y="986.2" width="1.4" height="9.4" fill="rgb(117,140,80)"/>
<rect x="1378.2" y="986.2" width="4.6" height="9.4" fill="rgb(115,212,0)"/>
<rect x="1382.8" y="986.2" width="1.4" height="9.4" fill="rgb(118,140,80)"/>
<rect x="1384.2" y="986.2" width="4.6" height="9.4" fill="rgb(118,211,0)"/>
<rect x="1388.8" y="986.2" width="1.4" height="9.4" fill="rgb(119,140,80)"/>
<rect x="1390.2" y="986.2" width="4.6" height="9.4" fill="rgb(122,210,0)"/>
<rect x="1394.8" y="986.2" width="1.4" height="9.4" fill="rgb(120,140,80)"/>
<defs><pattern id="dith" width="2.5" height="2.5" patternUnits="userSpaceOnUse"><rect width="2.5" height="2.5" fill="#7a7a7a"/><rect width="1.25" height="1.25" fill="#3c3c3c"/><rect x="1.25" y="1.25" width="1.25" height="1.25" fill="#3c3c3c"/></pattern><pattern id="dots" width="5" height="5" patternUnits="userSpaceOnUse"><rect width="5" height="5" fill="#a0a0a0"/><rect x="1" y="1" width="1.4" height="1.4" fill="#fff"/><rect x="3.4" y="3.2" width="1.4" height="1.4" fill="#f4f4f4"/></pattern></defs>
<g transform="translate(5.3 125.3)">
<path d="M12.1 10 L23.2 10 L28.8 15.5 L28.8 29.7 L12.1 29.7 Z" stroke="#000" stroke-width="1.5" fill="#fff"/>
<path d="M23.2 10 L23.2 15.5 L28.8 15.5" stroke="#000" stroke-width="1.4" fill="none"/>
</g>
<g transform="translate(50.6 125.3)">
<path d="M10.6 27.6 L10.6 13.2 L16.6 13.2 L16.6 15.1 L26.5 15.1 L26.5 19.8" stroke="#000" stroke-width="1.5" fill="#fff"/>
<rect x="11.2" y="15.4" width="14.8" height="9" fill="#fff"/>
<path d="M18.6 19.9 L34.2 19.9 L26.6 27.7 L10.8 27.7 Z" stroke="#000" stroke-width="1.5" fill="#a0a0a0"/>
<path d="M22.4 11.2 Q26 6.4 31.2 12" stroke="#000" stroke-width="1.4" fill="none" stroke-dasharray="2.4 1"/>
<path d="M28.6 14.2 L33.2 10 L33.2 14.4 Z" stroke="none" stroke-width="0" fill="#000"/>
</g>
<g transform="translate(95.6 125.3)">
<rect x="10.4" y="8.9" width="20.8" height="20.4" fill="#808080" stroke="#000" stroke-width="1.5"/>
<rect x="14.4" y="9.6" width="13.6" height="10.1" fill="#fff" stroke="#000" stroke-width="1.2"/>
<rect x="15" y="22.8" width="14.1" height="6.5" fill="#000"/>
<rect x="24" y="23.8" width="2.8" height="4.4" fill="#fff"/>
<rect x="29.2" y="10.4" width="1.2" height="1.8" fill="#fff"/>
</g>
<g transform="translate(152.2 125.3)">
<path d="M17 8.8 L30.6 8.8 L27.8 18.2 L12.6 18.2 Z" stroke="#000" stroke-width="1.5" fill="#f4f4f4"/>
<line x1="18.8" y1="12.1" x2="26.2" y2="12.1" stroke="#000" stroke-width="1.3"/>
<line x1="17.6" y1="15.3" x2="25.4" y2="15.3" stroke="#000" stroke-width="1.3"/>
<path d="M29.4 18.4 L33.6 15.8 L33.6 23.8 L29.4 27 Z" stroke="#000" stroke-width="1.3" fill="url(#dots)"/>
<path d="M30.6 10 L33.6 15.8" stroke="#000" stroke-width="1.3" fill="none"/>
<rect x="9.6" y="18.8" width="19.8" height="7.8" fill="#e8e8e8" stroke="#000" stroke-width="1.5" rx="1.6"/>
<rect x="11.2" y="22.2" width="16.6" height="2.4" fill="#fff"/>
<line x1="10.2" y1="21.2" x2="28.8" y2="21.2" stroke="#000" stroke-width="1.2"/>
<path d="M12.6 26.8 L12.6 29.3 L28.4 29.3 L31.6 26 L29.4 26.8" stroke="#000" stroke-width="1.4" fill="#f0f0f0"/>
</g>
<g transform="translate(209.8 125.3)">
<path d="M7.2 6.9 L19.2 19.9 L7.2 32.7 Z" stroke="none" stroke-width="0" fill="url(#dith)"/>
<path d="M22.5 9.9 L31.3 19.9 L22.5 29.7 Z" stroke="none" stroke-width="0" fill="url(#dith)"/>
<line x1="6" y1="19.9" x2="35.6" y2="19.9" stroke="#000" stroke-width="1.6"/>
<path d="M4 19.9 L7.4 17.8 L7.4 22 Z" stroke="none" stroke-width="0" fill="#000"/>
<line x1="7.4" y1="19.9" x2="31" y2="19.9" stroke="#000" stroke-width="2.4" stroke-dasharray="1.6 0.9"/>
</g>
<g transform="translate(255 125.3)">
<line x1="7.1" y1="7.9" x2="34.9" y2="7.9" stroke="#a6a6a6" stroke-width="1.5"/>
<line x1="7.1" y1="16.9" x2="34.9" y2="16.9" stroke="#a6a6a6" stroke-width="1.5"/>
<line x1="7.1" y1="25.9" x2="34.9" y2="25.9" stroke="#a6a6a6" stroke-width="1.5"/>
<line x1="7.1" y1="34.9" x2="34.9" y2="34.9" stroke="#a6a6a6" stroke-width="1.5"/>
<line x1="7.1" y1="7.9" x2="7.1" y2="34.9" stroke="#a6a6a6" stroke-width="1.5"/>
<line x1="16.4" y1="7.9" x2="16.4" y2="34.9" stroke="#a6a6a6" stroke-width="1.5"/>
<line x1="25.6" y1="7.9" x2="25.6" y2="34.9" stroke="#a6a6a6" stroke-width="1.5"/>
<line x1="34.9" y1="7.9" x2="34.9" y2="34.9" stroke="#a6a6a6" stroke-width="1.5"/>
<path d="M7.3 13.6 L10.4 17.4 L12.4 19.6 L13.4 17 L13.7 10.4 L14.2 18 L14.6 20.6 L17 21.8 L20.4 24 L23.6 24.2 L26.2 20.6 L28.2 16.2 L29.9 12.2 L30.4 16 L31.2 21.6 L32.2 26.2 L34.4 29.2 L34.6 33.4" stroke="#000" stroke-width="2.2" fill="none" stroke-linejoin="round" stroke-linecap="round"/>
<path d="M10.8 17.2 L13.4 13.8 L14.6 20.8 L12.4 21.4 Z" stroke="none" stroke-width="0" fill="#000"/>
<path d="M27.2 17.4 L29.9 12.6 L31 19.4 L28.6 20.4 Z" stroke="none" stroke-width="0" fill="#000"/>
</g>
<g transform="translate(300 125.3)">
<path d="M5.5 21.9 L19.5 7.4 L19.5 30.7 L34.1 16.1" stroke="#000" stroke-width="1.35" fill="none" stroke-linejoin="miter"/>
</g>
<g transform="translate(344.9 125.3)">
<rect x="5.7" y="5.9" width="28.1" height="28" fill="url(#dots)"/>
<path d="M8.8 7.4 C12 9.8 12.4 12.4 11 15.4 S13.6 20.8 12.2 23.6 S13.2 31 9.2 33.4" stroke="#000" stroke-width="2.1" fill="none" stroke-linecap="round"/>
<path d="M18.3 7.4 C21.5 9.8 21.9 12.4 20.5 15.4 S23.1 20.8 21.7 23.6 S22.7 31 18.7 33.4" stroke="#000" stroke-width="2.1" fill="none" stroke-linecap="round"/>
<path d="M24.3 12.2 C27.5 14.6 27.9 17.2 26.5 20.2 S29.1 25.6 27.7 28.4 S28.7 31 24.7 33.4" stroke="#000" stroke-width="2.1" fill="none" stroke-linecap="round"/>
</g>
<g transform="translate(390 125.3)">
<line x1="8.8" y1="15.1" x2="33.8" y2="15.1" stroke="#000" stroke-width="1.5"/>
<line x1="7.3" y1="18.1" x2="33.8" y2="18.1" stroke="#000" stroke-width="1.5"/>
<line x1="5.5" y1="21.1" x2="33.8" y2="21.1" stroke="#000" stroke-width="1.5"/>
<line x1="5.5" y1="24.2" x2="32" y2="24.2" stroke="#000" stroke-width="1.5"/>
<line x1="5.5" y1="27.2" x2="30.6" y2="27.2" stroke="#000" stroke-width="1.5"/>
<line x1="13" y1="30.7" x2="29" y2="30.7" stroke="#000" stroke-width="1.5"/>
<line x1="10.5" y1="33.7" x2="27.8" y2="33.7" stroke="#000" stroke-width="1.5"/>
<rect x="19.4" y="13.4" width="7.4" height="14.6" fill="#f0f0f0"/>
<path d="M20.2 15.1 L22.6 14 L21.4 10.4 L24 7.4 L24.6 11.4 L26.2 13.8 L25 17.4 L23.2 20.4 L24 23.4 L21.8 25.6 L22.6 28.4" stroke="#000" stroke-width="1.4" fill="none"/>
<path d="M13.4 19.4 L16.2 19.4 L16.2 24.2 L19.8 24.2 L19.8 30.4 L13.6 30.4 L12.6 33.4" stroke="#000" stroke-width="1.5" fill="none"/>
<path d="M13.2 19.6 L15.4 19.6 L15.4 24.4 L13.2 24.4 Z" stroke="none" stroke-width="0" fill="#000"/>
<path d="M5.6 33.8 L6.6 29.4 L9.2 27.4 L7.8 31.4 Z" stroke="#000" stroke-width="1.2" fill="#000"/>
</g>
<g transform="translate(491.6 125.3)">
<path d="M6.7 6.1 L6.7 33.4 L34.2 33.4" stroke="#000" stroke-width="1.7" fill="none"/>
<line x1="6.7" y1="6.1" x2="11.8" y2="6.1" stroke="#000" stroke-width="1.5"/>
<line x1="6.7" y1="9.2" x2="9.2" y2="9.2" stroke="#000" stroke-width="1.5"/>
<line x1="6.7" y1="12.2" x2="9.2" y2="12.2" stroke="#000" stroke-width="1.5"/>
<line x1="6.7" y1="15.4" x2="11.8" y2="15.4" stroke="#000" stroke-width="1.5"/>
<line x1="6.7" y1="18.4" x2="9.2" y2="18.4" stroke="#000" stroke-width="1.5"/>
<line x1="6.7" y1="21.3" x2="9.2" y2="21.3" stroke="#000" stroke-width="1.5"/>
<line x1="6.7" y1="24.2" x2="11.8" y2="24.2" stroke="#000" stroke-width="1.5"/>
<line x1="6.7" y1="27.2" x2="9.2" y2="27.2" stroke="#000" stroke-width="1.5"/>
<line x1="9.7" y1="33.4" x2="9.7" y2="31.2" stroke="#000" stroke-width="1.5"/>
<line x1="12.7" y1="33.4" x2="12.7" y2="31.2" stroke="#000" stroke-width="1.5"/>
<line x1="15.7" y1="33.4" x2="15.7" y2="28.4" stroke="#000" stroke-width="1.5"/>
<line x1="18.7" y1="33.4" x2="18.7" y2="31.2" stroke="#000" stroke-width="1.5"/>
<line x1="21.7" y1="33.4" x2="21.7" y2="31.2" stroke="#000" stroke-width="1.5"/>
<line x1="24.7" y1="33.4" x2="24.7" y2="28.4" stroke="#000" stroke-width="1.5"/>
<line x1="27.7" y1="33.4" x2="27.7" y2="31.2" stroke="#000" stroke-width="1.5"/>
<line x1="30.7" y1="33.4" x2="30.7" y2="31.2" stroke="#000" stroke-width="1.5"/>
<line x1="33.7" y1="33.4" x2="33.7" y2="28.4" stroke="#000" stroke-width="1.5"/>
</g>
<g transform="translate(536.7 125.3)">
<line x1="19.9" y1="5.9" x2="19.9" y2="21.7" stroke="#000" stroke-width="1.5"/>
<line x1="7.4" y1="18.4" x2="32.7" y2="18.4" stroke="#000" stroke-width="1.5"/>
<path d="M19.9 9.2 L23.4 14.4 L16.4 14.4 Z" stroke="none" stroke-width="0" fill="#000"/>
<path d="M17.4 13.6 L10.2 23.6" stroke="#000" stroke-width="2.2" fill="none"/>
<path d="M22.4 13.6 L29.6 23.6" stroke="#000" stroke-width="2.2" fill="none"/>
<rect x="17.8" y="14.6" width="4.2" height="3.2" fill="#f0f0f0" stroke="#000" stroke-width="1.1"/>
<line x1="19.9" y1="14" x2="19.9" y2="21.7" stroke="#000" stroke-width="1.3"/>
<path d="M10.2 23.6 Q8.6 25.4 8.9 28.4 Q9.4 31.6 13.4 33.2 L17.4 33.4" stroke="#000" stroke-width="1.5" fill="none" stroke-dasharray="3.4 1.1"/>
<path d="M29.6 23.6 Q31.2 25.4 31 28.4 Q30.4 31.6 26.5 33.2 L22.6 33.4" stroke="#000" stroke-width="1.5" fill="none" stroke-dasharray="3.4 1.1"/>
</g>
<g transform="translate(728.6 125.3)">
<circle cx="20" cy="19.7" r="14.2" fill="#fff" stroke="#000" stroke-width="1.4"/>
<line x1="20" y1="2.8" x2="20" y2="5.6" stroke="#000" stroke-width="1.5"/>
<line x1="20" y1="33.9" x2="20" y2="36.9" stroke="#000" stroke-width="1.5"/>
<path d="M10.8 21.8 C11.6 13 17 10.6 20 19.7 C23 28.8 28.4 26.4 29.4 17.8" stroke="#000" stroke-width="1.5" fill="none"/>
</g>
<g transform="translate(7.2 175)">
<path d="M11.07 5.3 L18.53 5.3 L23.8 10.57 L23.8 18.03 L18.53 23.3 L11.07 23.3 L5.8 18.03 L5.8 10.57 Z" stroke="#000" stroke-width="1.4" fill="none"/>
<path d="M12.4 8.5 L17.2 8.5 L20.6 11.9 L20.6 16.7 L17.2 20.1 L12.4 20.1 L9 16.7 L9 11.9 Z" stroke="#000" stroke-width="1.4" fill="none"/>
<line x1="20.6" y1="20.6" x2="31.6" y2="31" stroke="#000" stroke-width="2.8" stroke-linecap="round"/>
</g>
<g transform="translate(52.4 175)">
<path d="M9.51 5.5 L14.89 5.5 L18.7 9.31 L18.7 14.69 L14.89 18.5 L9.51 18.5 L5.7 14.69 L5.7 9.31 Z" stroke="#000" stroke-width="1.4" fill="none"/>
<line x1="12.4" y1="18.5" x2="12.4" y2="21.4" stroke="#000" stroke-width="1.3"/>
<path d="M10.5 21 L14.5 21 L14.5 31.4 L12.5 33.8 L10.5 31.4 Z" stroke="none" stroke-width="0" fill="#000"/>
<text x="21.8" y="15.9" font-size="9.6" textLength="10.4" font-weight="bold" lengthAdjust="spacingAndGlyphs">IN</text>
<text x="17.5" y="33.6" font-size="17.8" textLength="17.2" lengthAdjust="spacingAndGlyphs">2X</text>
</g>
<g transform="translate(97.3 175)">
<path d="M9.51 5.5 L14.89 5.5 L18.7 9.31 L18.7 14.69 L14.89 18.5 L9.51 18.5 L5.7 14.69 L5.7 9.31 Z" stroke="#000" stroke-width="1.4" fill="none"/>
<line x1="12.4" y1="18.5" x2="12.4" y2="21.4" stroke="#000" stroke-width="1.3"/>
<path d="M10.5 21 L14.5 21 L14.5 31.4 L12.5 33.8 L10.5 31.4 Z" stroke="none" stroke-width="0" fill="#000"/>
<text x="16" y="15.9" font-size="9.4" textLength="19.8" font-weight="bold" lengthAdjust="spacingAndGlyphs">OUT</text>
<text x="17.5" y="33.6" font-size="17.8" textLength="17.2" lengthAdjust="spacingAndGlyphs">2X</text>
</g>
<g transform="translate(142.1 175)">
<path d="M9.51 5.5 L14.89 5.5 L18.7 9.31 L18.7 14.69 L14.89 18.5 L9.51 18.5 L5.7 14.69 L5.7 9.31 Z" stroke="#000" stroke-width="1.4" fill="none"/>
<path d="M16 18.6 L13.2 19.6 Q10.4 23.6 10.6 27 Q11 31.4 14 33.6 L14.2 30 Q12.6 27.4 13.4 23.6 Z" stroke="#000" stroke-width="0.8" fill="#000"/>
<text x="16" y="15.9" font-size="9.4" textLength="19.8" font-weight="bold" lengthAdjust="spacingAndGlyphs">OUT</text>
<text x="15.4" y="29.1" font-size="9" textLength="20.6" font-weight="bold" lengthAdjust="spacingAndGlyphs">FULL</text>
</g>
<g transform="translate(197.8 175)">
<path d="M7.8 32.1 L7.8 29.1 L12.3 29.1 L12.3 26.1 L14.2 26.1 L14.2 21.6 L15.7 21.6 L15.7 18.6 L16.9 18.6 L16.9 11.8 L16.9 18.6 L18.4 21.6 L20.6 24.2 L22.9 24.2 L22.9 26.8 L24.4 28.7 L30.4 28.7 L32.6 31.7 L35.3 31.7" stroke="#000" stroke-width="1.5" fill="none"/>
</g>
<g transform="translate(243 175)">
<path d="M6.3 33.6 L6.3 21.2 L10.9 21.2 L10.9 15.9 L15.4 15.9 L15.4 10.7 L19.9 10.7 L19.9 21.2 L24.4 21.2 L24.4 16.7 L28.9 16.7 L28.9 20.1 L33.4 20.1 L33.4 33.6" stroke="#000" stroke-width="1.5" fill="none"/>
</g>
<g transform="translate(287.8 175)">
<path d="M6.6 33.6 L6.6 21.2 L11.1 21.2 L11.1 33.6" stroke="#000" stroke-width="1.5" fill="none"/>
<path d="M11.1 33.6 L11.1 15.5 L15.6 15.5 L15.6 33.6" stroke="#000" stroke-width="1.5" fill="none"/>
<path d="M15.6 33.6 L15.6 10.7 L20.1 10.7 L20.1 33.6" stroke="#000" stroke-width="1.5" fill="none"/>
<path d="M20.1 33.6 L20.1 12.2 L24.6 12.2 L24.6 33.6" stroke="#000" stroke-width="1.5" fill="none"/>
<path d="M24.6 33.6 L24.6 16.7 L29.1 16.7 L29.1 33.6" stroke="#000" stroke-width="1.5" fill="none"/>
<path d="M29.1 33.6 L29.1 20.1 L33.6 20.1 L33.6 33.6" stroke="#000" stroke-width="1.5" fill="none"/>
</g>
<g transform="translate(343.3 175)">
<rect x="4.6" y="4.4" width="30.8" height="30.4" fill="#fff" stroke="#000" stroke-width="1.5"/>
<rect x="5.2" y="5" width="29.6" height="4.6" fill="#222"/>
<line x1="9" y1="7.2" x2="29" y2="7.2" stroke="#ddd" stroke-width="1.2" stroke-dasharray="1.2 1"/>
<rect x="6.2" y="6.2" width="1.2" height="2" fill="#fff"/>
<rect x="31.6" y="6" width="2" height="2.4" fill="#fff"/>
<rect x="10.9" y="12.3" width="21" height="4.3" fill="#fff" stroke="#000" stroke-width="1.4"/>
<rect x="20" y="20.2" width="11.9" height="4" fill="#fff" stroke="#000" stroke-width="1.4"/>
<rect x="20" y="27.7" width="11.9" height="4" fill="#fff" stroke="#000" stroke-width="1.4"/>
<path d="M9 21 L11.4 23 L13 21.6 L15 23 L17.4 21.4" stroke="#000" stroke-width="1.1" fill="none" stroke-dasharray="2 0.8"/>
<path d="M9 30.6 L11.4 28.6 L13.6 30.6 L15.4 29 L17.2 30.6" stroke="#000" stroke-width="1.1" fill="none" stroke-dasharray="2 0.8"/>
</g>
<g transform="translate(443.9 175)">
<path d="M8.3 4.3 L8.3 33.3 L32.9 33.3" stroke="#000" stroke-width="1.5" fill="none"/>
<line x1="13.4" y1="6.3" x2="26.5" y2="6.3" stroke="#000" stroke-width="1.5"/>
<line x1="13.4" y1="30.1" x2="26.5" y2="30.1" stroke="#000" stroke-width="1.5"/>
<line x1="20.2" y1="6.3" x2="20.2" y2="30.1" stroke="#000" stroke-width="1.4" stroke-dasharray="6 1.2 3 1.2 3 1.2 20"/>
<path d="M20.2 6.6 L24.6 11.3 L15.8 11.3 Z" stroke="none" stroke-width="0" fill="#000"/>
<path d="M20.2 29.8 L24.6 25.6 L15.8 25.6 Z" stroke="none" stroke-width="0" fill="#000"/>
</g>
<g transform="translate(3.1 7.3)">
<rect x="0" y="0" width="23.6" height="23.3" fill="#fff"/>
<rect x="3.4" y="0.8" width="1.3" height="21.4" fill="#b4b4b4"/>
<rect x="7.8" y="0.8" width="1.3" height="21.4" fill="#b4b4b4"/>
<rect x="12.2" y="0.8" width="1.3" height="21.4" fill="#b4b4b4"/>
<rect x="16.6" y="0.8" width="1.3" height="21.4" fill="#b4b4b4"/>
<rect x="21" y="0.8" width="1.3" height="21.4" fill="#b4b4b4"/>
<rect x="0" y="0" width="23.6" height="1" fill="#8a8a8a"/>
<rect x="0" y="0" width="1" height="23.3" fill="#8a8a8a"/>
<rect x="22.2" y="0" width="1.5" height="23.3" fill="#111"/>
<rect x="0" y="21.8" width="23.6" height="1.5" fill="#111"/>
<path d="M1.4 4.6 L5 4.4 L7.4 1.6 L9.4 5 L11.8 6.6 L14.4 3.4 L17.4 3.2 L19.4 7 L21 8.6" stroke="#ff1010" stroke-width="1.7" fill="none"/>
<path d="M1 4.8 L4.6 4.8 L7 7.6 L9.6 8.2 L11.6 10 L14.6 5.4 L16.4 6 L17.4 10.4 L20 12.6" stroke="#1010ff" stroke-width="2" fill="none"/>
<rect x="4.6" y="14.6" width="1.7" height="6" fill="#111"/>
<rect x="7.4" y="15.6" width="1.7" height="5" fill="#111"/>
<rect x="10.6" y="14.2" width="1.7" height="6.4" fill="#111"/>
<rect x="14.2" y="15.8" width="1.7" height="4.8" fill="#111"/>
<rect x="17.2" y="14.4" width="1.7" height="6.2" fill="#111"/>
<rect x="5" y="16.8" width="7" height="1.4" fill="#111"/>
</g>
<g transform="translate(8.8 38.5)">
<rect x="0" y="0" width="23" height="21.4" fill="#a2a2a2"/>
<rect x="0.7" y="-0.8" width="3.1" height="3.1" fill="#fff"/>
<rect x="0.7" y="3.7" width="3.1" height="3.1" fill="#fff"/>
<rect x="0.7" y="8.2" width="3.1" height="3.1" fill="#fff"/>
<rect x="0.7" y="12.7" width="3.1" height="3.1" fill="#fff"/>
<rect x="0.7" y="17.2" width="3.1" height="3.1" fill="#fff"/>
<rect x="5.3" y="-0.8" width="3.1" height="3.1" fill="#fff"/>
<rect x="5.3" y="3.7" width="3.1" height="3.1" fill="#fff"/>
<rect x="5.3" y="8.2" width="3.1" height="3.1" fill="#fff"/>
<rect x="5.3" y="12.7" width="3.1" height="3.1" fill="#fff"/>
<rect x="5.3" y="17.2" width="3.1" height="3.1" fill="#fff"/>
<rect x="9.9" y="-0.8" width="3.1" height="3.1" fill="#fff"/>
<rect x="9.9" y="3.7" width="3.1" height="3.1" fill="#fff"/>
<rect x="9.9" y="8.2" width="3.1" height="3.1" fill="#fff"/>
<rect x="9.9" y="12.7" width="3.1" height="3.1" fill="#fff"/>
<rect x="9.9" y="17.2" width="3.1" height="3.1" fill="#fff"/>
<rect x="14.5" y="-0.8" width="3.1" height="3.1" fill="#fff"/>
<rect x="14.5" y="3.7" width="3.1" height="3.1" fill="#fff"/>
<rect x="14.5" y="8.2" width="3.1" height="3.1" fill="#fff"/>
<rect x="14.5" y="12.7" width="3.1" height="3.1" fill="#fff"/>
<rect x="14.5" y="17.2" width="3.1" height="3.1" fill="#fff"/>
<rect x="19.1" y="-0.8" width="3.1" height="3.1" fill="#fff"/>
<rect x="19.1" y="3.7" width="3.1" height="3.1" fill="#fff"/>
<rect x="19.1" y="8.2" width="3.1" height="3.1" fill="#fff"/>
<rect x="19.1" y="12.7" width="3.1" height="3.1" fill="#fff"/>
<rect x="19.1" y="17.2" width="3.1" height="3.1" fill="#fff"/>
<rect x="0" y="-1" width="23" height="1.2" fill="#fff"/>
<rect x="21.6" y="0" width="1.5" height="21.4" fill="#111"/>
<rect x="0" y="20" width="23" height="1.5" fill="#111"/>
<path d="M1.4 4.8 L8.6 4.6 L9.2 5.4" stroke="#ff1010" stroke-width="1.8" fill="none"/>
<path d="M14.2 4.6 L17 7.2 L19 9" stroke="#ff1010" stroke-width="1.8" fill="none"/>
<path d="M1.2 6.4 L6.4 6.6 L7.6 9.4 L9.6 10" stroke="#1010ff" stroke-width="2" fill="none"/>
<path d="M10.4 11.6 L12.2 12.2" stroke="#1010ff" stroke-width="2" fill="none"/>
<path d="M13.4 10.6 L14.8 7.8 L16.4 9.8 L18.2 13.4 L19.8 16.2" stroke="#1010ff" stroke-width="2" fill="none"/>
</g>
<rect x="43.4" y="57.4" width="8.5" height="1.3" fill="#000"/>
<rect x="91.4" y="57.4" width="8.8" height="1.3" fill="#000"/>
<rect x="142.6" y="57.4" width="14" height="1.3" fill="#000"/>
<rect x="209.6" y="57.4" width="12.8" height="1.3" fill="#000"/>
<rect x="293.4" y="57.4" width="9.2" height="1.3" fill="#000"/>
<rect x="345.6" y="57.4" width="11.8" height="1.3" fill="#000"/>
<rect x="425.6" y="57.4" width="11.6" height="1.3" fill="#000"/>
<rect x="500.4" y="57.4" width="8.2" height="1.3" fill="#000"/>
<rect x="579.2" y="57.4" width="16.4" height="1.3" fill="#000"/>
<rect x="667.4" y="57.4" width="12" height="1.3" fill="#000"/>
</svg>
</body></html>
